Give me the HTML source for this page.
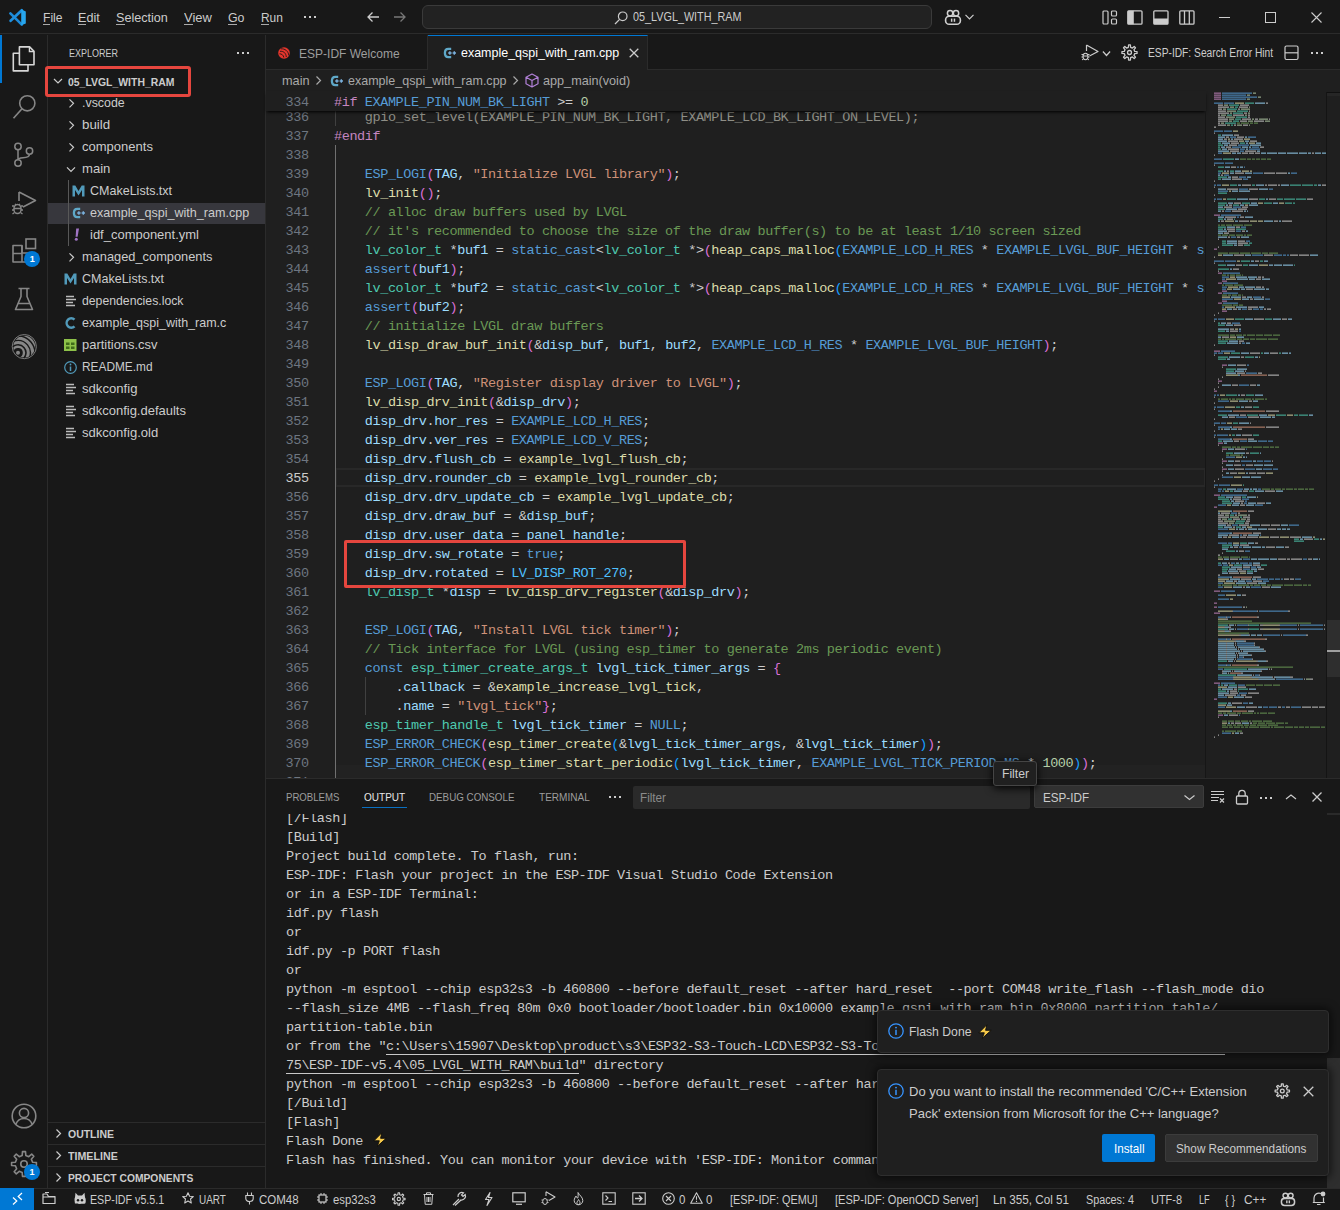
<!DOCTYPE html>
<html><head><meta charset="utf-8"><title>VS Code</title><style>
*{margin:0;padding:0;box-sizing:border-box}
html,body{width:1340px;height:1210px;overflow:hidden;background:#181818}
body{position:relative;font-family:"Liberation Sans",sans-serif;color:#cccccc}
.a{position:absolute}
.t{position:absolute;white-space:pre;transform-origin:0 50%}
.m{position:absolute;white-space:pre;font-family:"Liberation Mono",monospace}
svg{position:absolute;overflow:visible}
.ic{fill:none;stroke:#cccccc;stroke-width:1.2}
</style></head>
<body>
<div class="a" style="left:0;top:0;width:1340px;height:34px;background:#181818;border-bottom:1px solid #2b2b2b"></div>
<svg style="left:5px;top:5px" width="25" height="25" viewBox="0 0 25 25">
<path d="M5.4 8.4L16.8 19.6" stroke="#1d8ad8" stroke-width="2.7" stroke-linecap="round"/>
<path d="M5.6 15.8L16.8 5.2" stroke="#1f8fde" stroke-width="2.7" stroke-linecap="round"/>
<path d="M16.2 4.3L20.8 6.4V18.6L16.2 20.3Z" fill="#27a6ee"/>
</svg>
<div class="t" style="left:43.00px;top:7.79px;font-size:13px;line-height:20px;color:#cccccc;transform:scaleX(0.9306);">File</div>
<div class="a" style="left:43.0px;top:23.5px;width:7.4px;height:1px;background:#aaaaaa"></div>
<div class="t" style="left:78.10px;top:7.79px;font-size:13px;line-height:20px;color:#cccccc;transform:scaleX(0.9685);">Edit</div>
<div class="a" style="left:78.1px;top:23.5px;width:8.4px;height:1px;background:#aaaaaa"></div>
<div class="t" style="left:116.20px;top:7.79px;font-size:13px;line-height:20px;color:#cccccc;transform:scaleX(0.9701);">Selection</div>
<div class="a" style="left:116.2px;top:23.5px;width:8.4px;height:1px;background:#aaaaaa"></div>
<div class="t" style="left:184.00px;top:7.79px;font-size:13px;line-height:20px;color:#cccccc;transform:scaleX(0.9945);">View</div>
<div class="a" style="left:184.0px;top:23.5px;width:8.6px;height:1px;background:#aaaaaa"></div>
<div class="t" style="left:227.70px;top:7.79px;font-size:13px;line-height:20px;color:#cccccc;transform:scaleX(0.9514);">Go</div>
<div class="a" style="left:227.7px;top:23.5px;width:9.6px;height:1px;background:#aaaaaa"></div>
<div class="t" style="left:260.60px;top:7.79px;font-size:13px;line-height:20px;color:#cccccc;transform:scaleX(0.9179);">Run</div>
<div class="a" style="left:260.6px;top:23.5px;width:8.6px;height:1px;background:#aaaaaa"></div>
<div class="a" style="left:304px;top:16px;width:2px;height:2px;background:#cccccc"></div>
<div class="a" style="left:309px;top:16px;width:2px;height:2px;background:#cccccc"></div>
<div class="a" style="left:314px;top:16px;width:2px;height:2px;background:#cccccc"></div>
<svg style="left:366px;top:11px" width="14" height="12" viewBox="0 0 14 12"><path d="M13 6H2M6.5 1.5L2 6l4.5 4.5" fill="none" stroke="#cccccc" stroke-width="1.3"/></svg>
<svg style="left:393px;top:11px" width="14" height="12" viewBox="0 0 14 12"><path d="M1 6h11M7.5 1.5L12 6l-4.5 4.5" fill="none" stroke="#777777" stroke-width="1.3"/></svg>
<div class="a" style="left:421.5px;top:5px;width:510.5px;height:24px;border-radius:6px;background:#222222;border:1px solid #3a3a3a"></div>
<svg style="left:614px;top:11px" width="14" height="14" viewBox="0 0 14 14"><circle cx="8.7" cy="5.3" r="4.3" fill="none" stroke="#cccccc" stroke-width="1.2"/><path d="M5.6 8.4L1 13" stroke="#cccccc" stroke-width="1.3"/></svg>
<div class="t" style="left:632.60px;top:7.49px;font-size:13px;line-height:20px;color:#cccccc;transform:scaleX(0.8319);">05_LVGL_WITH_RAM</div>
<svg style="left:944px;top:8px" width="18" height="18" viewBox="0 0 18 18">
<circle cx="6.1" cy="5.2" r="2.7" fill="none" stroke="#d0d0d0" stroke-width="1.5"/>
<circle cx="12" cy="5.2" r="2.7" fill="none" stroke="#d0d0d0" stroke-width="1.5"/>
<rect x="1.6" y="8.3" width="14.8" height="8" rx="3.6" fill="none" stroke="#d0d0d0" stroke-width="1.6"/>
<rect x="6.9" y="10.6" width="1.5" height="3.2" fill="#d0d0d0"/><rect x="9.7" y="10.6" width="1.5" height="3.2" fill="#d0d0d0"/>
</svg>
<svg style="left:965px;top:14px" width="9" height="6" viewBox="0 0 9 6"><path d="M0.5 0.8L4.5 4.8L8.5 0.8" fill="none" stroke="#cccccc" stroke-width="1.2"/></svg>
<svg style="left:1102px;top:10px" width="16" height="15" viewBox="0 0 16 15">
<rect x="1" y="1" width="5" height="13" rx="1" fill="none" stroke="#cccccc" stroke-width="1.2"/>
<rect x="9.5" y="1" width="5" height="5" rx="1" fill="none" stroke="#cccccc" stroke-width="1.2"/>
<rect x="9.5" y="9" width="5" height="5" rx="1" fill="none" stroke="#cccccc" stroke-width="1.2"/></svg>
<svg style="left:1127px;top:10px" width="16" height="15" viewBox="0 0 16 15">
<rect x="0.8" y="0.8" width="14.2" height="13.4" rx="1" fill="none" stroke="#cccccc" stroke-width="1.3"/>
<rect x="0.8" y="0.8" width="6" height="13.4" fill="#cccccc"/></svg>
<svg style="left:1153px;top:10px" width="16" height="15" viewBox="0 0 16 15">
<rect x="0.8" y="0.8" width="14.2" height="13.4" rx="1" fill="none" stroke="#cccccc" stroke-width="1.3"/>
<rect x="0.8" y="8.5" width="14.2" height="5.7" fill="#cccccc"/></svg>
<svg style="left:1179px;top:10px" width="16" height="15" viewBox="0 0 16 15">
<rect x="0.8" y="0.8" width="14.2" height="13.4" rx="1" fill="none" stroke="#cccccc" stroke-width="1.3"/>
<path d="M5.5 1V14M10.3 1V14" stroke="#cccccc" stroke-width="1.3"/></svg>
<div class="a" style="left:1219px;top:17px;width:11px;height:1px;background:#cccccc"></div>
<div class="a" style="left:1265px;top:12px;width:11px;height:11px;border:1px solid #cccccc"></div>
<svg style="left:1311px;top:12px" width="11" height="11" viewBox="0 0 11 11"><path d="M0.5 0.5L10.5 10.5M10.5 0.5L0.5 10.5" stroke="#cccccc" stroke-width="1.1"/></svg>
<div class="a" style="left:0;top:35px;width:48px;height:1153px;background:#181818;border-right:1px solid #2b2b2b"></div>
<div class="a" style="left:0;top:35px;width:2px;height:48px;background:#0078d4"></div>
<svg style="left:12px;top:46px" width="24" height="26" viewBox="0 0 24 26">
<path d="M7.4 0.9H17.6L22 5.3V18.8H7.4Z" fill="none" stroke="#d7d7d7" stroke-width="1.6" stroke-linejoin="round"/>
<path d="M17.4 1V5.5H22" fill="none" stroke="#d7d7d7" stroke-width="1.3"/>
<path d="M7.4 7.2H1.3V24.9H16V18.8" fill="none" stroke="#d7d7d7" stroke-width="1.6" stroke-linejoin="round"/>
</svg>
<svg style="left:12px;top:94px" width="25" height="26" viewBox="0 0 25 26">
<circle cx="15.3" cy="9.3" r="7.6" fill="none" stroke="#868686" stroke-width="1.6"/>
<path d="M10 14.8L1.5 24.2" stroke="#868686" stroke-width="1.7"/></svg>
<svg style="left:13px;top:142px" width="22" height="26" viewBox="0 0 22 26">
<circle cx="5" cy="4.5" r="3.2" fill="none" stroke="#868686" stroke-width="1.5"/>
<circle cx="5" cy="21" r="3.2" fill="none" stroke="#868686" stroke-width="1.5"/>
<circle cx="16.5" cy="9" r="3.2" fill="none" stroke="#868686" stroke-width="1.5"/>
<path d="M5 7.7V17.8M16.5 12.2C16.5 15 14 15.5 10 15.8C7 16 5 16.8 5 17.8" fill="none" stroke="#868686" stroke-width="1.5"/></svg>
<svg style="left:11px;top:190px" width="26" height="26" viewBox="0 0 26 26">
<path d="M8 2V11M8 2L24.5 10.5L12 17" fill="none" stroke="#868686" stroke-width="1.6" stroke-linejoin="round"/>
<ellipse cx="6.5" cy="19" rx="3.6" ry="4.6" fill="none" stroke="#868686" stroke-width="1.5"/>
<path d="M1 16H3M10 16H12M1 20H3M10 20H12M1.5 24L3.5 22.5M11.5 24L9.5 22.5M4 13.8L5 15M9 13.8L8 15M3 18.5H10" stroke="#868686" stroke-width="1.3"/></svg>
<svg style="left:12px;top:238px" width="25" height="25" viewBox="0 0 25 25">
<path d="M1 7.5H10V15H17.5V24H1Z" fill="none" stroke="#868686" stroke-width="1.6" stroke-linejoin="round"/>
<path d="M1 15.5H10V24M10 7.5V15" fill="none" stroke="#868686" stroke-width="1.6"/>
<rect x="14" y="1" width="9.5" height="9.5" fill="none" stroke="#868686" stroke-width="1.6"/></svg>
<div class="a" style="left:24.2px;top:251.3px;width:16px;height:16px;border-radius:8px;background:#0078d4;color:#fff;font-size:9px;font-weight:bold;line-height:16px;text-align:center">1</div>
<svg style="left:14px;top:287px" width="20" height="24" viewBox="0 0 20 24">
<path d="M4.5 1.5H15.5M7 1.5V9.5L1.5 22.5H18.5L13 9.5V1.5M4 16.5H16" fill="none" stroke="#868686" stroke-width="1.6" stroke-linejoin="round"/></svg>
<svg style="left:8px;top:330px" width="32" height="32" viewBox="0 0 32 32">
<defs><clipPath id="espclip"><circle cx="16.3" cy="16.6" r="10.9"/></clipPath></defs>
<circle cx="16.3" cy="16.6" r="12.1" fill="none" stroke="#868686" stroke-width="0.9"/>
<path d="M4.36 20.75A6.0 6.0 0 1 1 11.04 28.71" fill="none" stroke="#868686" stroke-width="2.4" clip-path="url(#espclip)"/>
<path d="M0.42 19.31A10.2 10.2 0 1 1 11.77 32.85" fill="none" stroke="#868686" stroke-width="3.0" clip-path="url(#espclip)"/>
<path d="M-3.72 17.81A14.6 14.6 0 1 1 12.54 37.18" fill="none" stroke="#868686" stroke-width="3.0" clip-path="url(#espclip)"/>
<path d="M-7.76 16.34A18.9 18.9 0 1 1 13.28 41.41" fill="none" stroke="#868686" stroke-width="2.6" clip-path="url(#espclip)"/>
<circle cx="10" cy="22.8" r="2" fill="#868686"/></svg>
<svg style="left:11px;top:1103px" width="26" height="26" viewBox="0 0 26 26">
<circle cx="13" cy="13" r="11.8" fill="none" stroke="#868686" stroke-width="1.6"/>
<circle cx="13" cy="10" r="4.6" fill="none" stroke="#868686" stroke-width="1.6"/>
<path d="M5 21C6.5 17 9.5 15.5 13 15.5S19.5 17 21 21" fill="none" stroke="#868686" stroke-width="1.6"/></svg>
<svg style="left:0;top:0" width="1" height="1"><path d="M22.18 1155.44 L22.50 1151.59 L25.50 1151.59 L25.82 1155.44 L28.76 1156.66 L31.72 1154.17 L33.83 1156.28 L31.34 1159.24 L32.56 1162.18 L36.41 1162.50 L36.41 1165.50 L32.56 1165.82 L31.34 1168.76 L33.83 1171.72 L31.72 1173.83 L28.76 1171.34 L25.82 1172.56 L25.50 1176.41 L22.50 1176.41 L22.18 1172.56 L19.24 1171.34 L16.28 1173.83 L14.17 1171.72 L16.66 1168.76 L15.44 1165.82 L11.59 1165.50 L11.59 1162.50 L15.44 1162.18 L16.66 1159.24 L14.17 1156.28 L16.28 1154.17 L19.24 1156.66Z" fill="none" stroke="#868686" stroke-width="1.6" stroke-linejoin="round"/><circle cx="24" cy="1164" r="3.25" fill="none" stroke="#868686" stroke-width="1.6"/></svg>
<div class="a" style="left:24.0px;top:1164.0px;width:16px;height:16px;border-radius:8px;background:#0078d4;color:#fff;font-size:9px;font-weight:bold;line-height:16px;text-align:center">1</div>
<div class="a" style="left:48px;top:35px;width:218px;height:1153px;background:#181818;border-right:1px solid #2b2b2b"></div>
<div class="t" style="left:68.60px;top:43.39px;font-size:11px;line-height:20px;color:#cccccc;transform:scaleX(0.8175);">EXPLORER</div>
<div class="a" style="left:237px;top:52px;width:2px;height:2px;background:#cccccc"></div>
<div class="a" style="left:242px;top:52px;width:2px;height:2px;background:#cccccc"></div>
<div class="a" style="left:247px;top:52px;width:2px;height:2px;background:#cccccc"></div>
<div class="a" style="left:48px;top:202.5px;width:217px;height:21.5px;background:#37373d"></div>
<svg style="left:0;top:0" width="1" height="1"><path d="M54.0 79.0L58.0 83.0L62.0 79.0" fill="none" stroke="#cccccc" stroke-width="1.2"/></svg>
<div class="t" style="left:68.00px;top:72.19px;font-size:11px;line-height:20px;color:#cccccc;font-weight:bold;transform:scaleX(0.9485);">05_LVGL_WITH_RAM</div>
<svg style="left:0;top:0" width="1" height="1"><path d="M69.5 99.3L73.5 103.3L69.5 107.3" fill="none" stroke="#cccccc" stroke-width="1.2"/></svg>
<div class="t" style="left:82.00px;top:93.39px;font-size:13px;line-height:20px;color:#cccccc;transform:scaleX(0.9529);">.vscode</div>
<svg style="left:0;top:0" width="1" height="1"><path d="M69.5 121.3L73.5 125.3L69.5 129.3" fill="none" stroke="#cccccc" stroke-width="1.2"/></svg>
<div class="t" style="left:82.00px;top:115.39px;font-size:13px;line-height:20px;color:#cccccc;transform:scaleX(1.0260);">build</div>
<svg style="left:0;top:0" width="1" height="1"><path d="M69.5 143.3L73.5 147.3L69.5 151.3" fill="none" stroke="#cccccc" stroke-width="1.2"/></svg>
<div class="t" style="left:82.00px;top:137.39px;font-size:13px;line-height:20px;color:#cccccc;transform:scaleX(1.0022);">components</div>
<svg style="left:0;top:0" width="1" height="1"><path d="M67.0 167.3L71.0 171.3L75.0 167.3" fill="none" stroke="#cccccc" stroke-width="1.2"/></svg>
<div class="t" style="left:82.00px;top:159.39px;font-size:13px;line-height:20px;color:#cccccc;transform:scaleX(1.0075);">main</div>
<svg style="left:72px;top:185.3px" width="13" height="12" viewBox="0 0 13 12"><path d="M0.5 11.5V0.5H3.3L6.5 6L9.7 0.5H12.5V11.5H10V5L6.5 10.5L3 5V11.5Z" fill="#519aba"/></svg>
<div class="t" style="left:90.00px;top:181.39px;font-size:13px;line-height:20px;color:#cccccc;transform:scaleX(0.9630);">CMakeLists.txt</div>
<svg style="left:72px;top:207.3px" width="14" height="12" viewBox="0 0 14 12"><path d="M8.2 1.9H5.4C3.1 1.9 1.9 3.7 1.9 6S3.1 10.1 5.4 10.1H8.2" fill="none" stroke="#5fa8c8" stroke-width="2.3"/><path d="M5.2 6H8.6M6.9 4.3V7.7M9.6 6H13M11.3 4.3V7.7" stroke="#7ab0dc" stroke-width="1.4"/></svg>
<div class="t" style="left:90.00px;top:203.39px;font-size:13px;line-height:20px;color:#cccccc;transform:scaleX(0.9659);">example_qspi_with_ram.cpp</div>
<svg style="left:74px;top:228.3px" width="6" height="13" viewBox="0 0 6 13"><path d="M2.2 0.5H5L3.6 8.8H1.6Z" fill="#a074c4"/><circle cx="2.3" cy="11.2" r="1.5" fill="#a074c4"/></svg>
<div class="t" style="left:90.00px;top:225.39px;font-size:13px;line-height:20px;color:#cccccc;transform:scaleX(0.9987);">idf_component.yml</div>
<svg style="left:0;top:0" width="1" height="1"><path d="M69.5 253.3L73.5 257.3L69.5 261.3" fill="none" stroke="#cccccc" stroke-width="1.2"/></svg>
<div class="t" style="left:82.00px;top:247.39px;font-size:13px;line-height:20px;color:#cccccc;transform:scaleX(0.9863);">managed_components</div>
<svg style="left:64px;top:273.3px" width="13" height="12" viewBox="0 0 13 12"><path d="M0.5 11.5V0.5H3.3L6.5 6L9.7 0.5H12.5V11.5H10V5L6.5 10.5L3 5V11.5Z" fill="#519aba"/></svg>
<div class="t" style="left:82.00px;top:269.39px;font-size:13px;line-height:20px;color:#cccccc;transform:scaleX(0.9630);">CMakeLists.txt</div>
<svg style="left:65px;top:295.3px" width="12" height="12" viewBox="0 0 12 12"><path d="M1 1.5H9M1 4.5H11M1 7.5H8M1 10.5H10" stroke="#bbbbbb" stroke-width="1.6"/></svg>
<div class="t" style="left:82.00px;top:291.39px;font-size:13px;line-height:20px;color:#cccccc;transform:scaleX(0.9421);">dependencies.lock</div>
<svg style="left:65px;top:317.3px" width="11" height="12" viewBox="0 0 11 12"><path d="M9.5 2.6A4.6 4.8 0 1 0 9.5 9.4" fill="none" stroke="#519aba" stroke-width="2.5"/></svg>
<div class="t" style="left:82.00px;top:313.39px;font-size:13px;line-height:20px;color:#cccccc;transform:scaleX(0.9598);">example_qspi_with_ram.c</div>
<svg style="left:64px;top:339.3px" width="13" height="12" viewBox="0 0 13 12"><rect x="0" y="0" width="12.5" height="12" fill="#8dc149"/><path d="M2 3.5H5.5V6H2ZM7 3.5H10.5V6H7ZM2 7.5H5.5V10H2ZM7 7.5H10.5V10H7Z" fill="#3f6b1a"/></svg>
<div class="t" style="left:82.00px;top:335.39px;font-size:13px;line-height:20px;color:#cccccc;transform:scaleX(0.9951);">partitions.csv</div>
<svg style="left:64px;top:360.8px" width="13" height="13" viewBox="0 0 13 13"><circle cx="6.5" cy="6.5" r="5.8" fill="none" stroke="#519aba" stroke-width="1.2"/><path d="M6.5 5.5V10" stroke="#519aba" stroke-width="1.5"/><circle cx="6.5" cy="3.5" r="0.9" fill="#519aba"/></svg>
<div class="t" style="left:82.00px;top:357.39px;font-size:13px;line-height:20px;color:#cccccc;transform:scaleX(0.9121);">README.md</div>
<svg style="left:65px;top:383.3px" width="12" height="12" viewBox="0 0 12 12"><path d="M1 1.5H9M1 4.5H11M1 7.5H8M1 10.5H10" stroke="#bbbbbb" stroke-width="1.6"/></svg>
<div class="t" style="left:82.00px;top:379.39px;font-size:13px;line-height:20px;color:#cccccc;transform:scaleX(1.0102);">sdkconfig</div>
<svg style="left:65px;top:405.3px" width="12" height="12" viewBox="0 0 12 12"><path d="M1 1.5H9M1 4.5H11M1 7.5H8M1 10.5H10" stroke="#bbbbbb" stroke-width="1.6"/></svg>
<div class="t" style="left:82.00px;top:401.39px;font-size:13px;line-height:20px;color:#cccccc;transform:scaleX(0.9991);">sdkconfig.defaults</div>
<svg style="left:65px;top:427.3px" width="12" height="12" viewBox="0 0 12 12"><path d="M1 1.5H9M1 4.5H11M1 7.5H8M1 10.5H10" stroke="#bbbbbb" stroke-width="1.6"/></svg>
<div class="t" style="left:82.00px;top:423.39px;font-size:13px;line-height:20px;color:#cccccc;transform:scaleX(1.0039);">sdkconfig.old</div>
<div class="a" style="left:68px;top:180px;width:1px;height:66px;background:#585858"></div>
<div class="a" style="left:48px;top:1122px;width:217px;height:1px;background:#2b2b2b"></div>
<svg style="left:0;top:0" width="1" height="1"><path d="M56.5 1129.5L60.5 1133.5L56.5 1137.5" fill="none" stroke="#cccccc" stroke-width="1.2"/></svg>
<div class="t" style="left:68.10px;top:1124.19px;font-size:11px;line-height:20px;color:#cccccc;font-weight:bold;transform:scaleX(0.9528);">OUTLINE</div>
<div class="a" style="left:48px;top:1144px;width:217px;height:1px;background:#2b2b2b"></div>
<svg style="left:0;top:0" width="1" height="1"><path d="M56.5 1151.5L60.5 1155.5L56.5 1159.5" fill="none" stroke="#cccccc" stroke-width="1.2"/></svg>
<div class="t" style="left:68.10px;top:1146.19px;font-size:11px;line-height:20px;color:#cccccc;font-weight:bold;transform:scaleX(0.9699);">TIMELINE</div>
<div class="a" style="left:48px;top:1166px;width:217px;height:1px;background:#2b2b2b"></div>
<svg style="left:0;top:0" width="1" height="1"><path d="M56.5 1173.5L60.5 1177.5L56.5 1181.5" fill="none" stroke="#cccccc" stroke-width="1.2"/></svg>
<div class="t" style="left:68.10px;top:1168.19px;font-size:11px;line-height:20px;color:#cccccc;font-weight:bold;transform:scaleX(0.9359);">PROJECT COMPONENTS</div>
<div class="a" style="left:44.5px;top:66px;width:146.5px;height:31px;border:3px solid #e5463e;border-radius:3px"></div>
<div class="a" style="left:266px;top:35px;width:1074px;height:35px;background:#181818;border-bottom:1px solid #2b2b2b"></div>
<div class="a" style="left:266px;top:35px;width:162px;height:34px;background:#181818;border-right:1px solid #2b2b2b"></div>
<svg style="left:278px;top:47px" width="12" height="12" viewBox="0 0 12 12">
<circle cx="6" cy="6" r="5.8" fill="#e7352c"/>
<path d="M2 4.3C5.5 4 8 6 8.3 10M2.8 1.8C7 1.5 10.5 4.2 10.8 8.5M1.5 6.8C3.5 6.8 5.5 8 5.8 10.5" fill="none" stroke="#181818" stroke-width="0.9"/></svg>
<div class="t" style="left:298.50px;top:43.59px;font-size:13px;line-height:20px;color:#9d9d9d;transform:scaleX(0.9243);">ESP-IDF Welcome</div>
<div class="a" style="left:428px;top:35px;width:220px;height:35px;background:#1f1f1f;border-top:1px solid #0078d4;border-right:1px solid #2b2b2b"></div>
<svg style="left:443px;top:47px" width="14" height="12" viewBox="0 0 14 12"><path d="M8.2 1.9H5.4C3.1 1.9 1.9 3.7 1.9 6S3.1 10.1 5.4 10.1H8.2" fill="none" stroke="#5fa8c8" stroke-width="2.3"/><path d="M5.2 6H8.6M6.9 4.3V7.7M9.6 6H13M11.3 4.3V7.7" stroke="#7ab0dc" stroke-width="1.4"/></svg>
<div class="t" style="left:460.80px;top:43.09px;font-size:13px;line-height:20px;color:#ffffff;transform:scaleX(0.9599);">example_qspi_with_ram.cpp</div>
<svg style="left:629px;top:48px" width="10" height="10" viewBox="0 0 10 10"><path d="M0.7 0.7L9.3 9.3M9.3 0.7L0.7 9.3" stroke="#cccccc" stroke-width="1.3"/></svg>
<svg style="left:1081px;top:44px" width="18" height="17" viewBox="0 0 18 17">
<path d="M5.5 1V7M5.5 1L17 7.5L8.5 12" fill="none" stroke="#cccccc" stroke-width="1.2" stroke-linejoin="round"/>
<ellipse cx="4.5" cy="12.5" rx="2.5" ry="3.2" fill="none" stroke="#cccccc" stroke-width="1.1"/>
<path d="M0.5 10.5H2M7 10.5H8.5M0.5 13H2M7 13H8.5M1 16L2.3 15M8 16L6.7 15M2 12H7" stroke="#cccccc" stroke-width="1"/></svg>
<svg style="left:0;top:0" width="1" height="1"><path d="M1102.9 51.5L1106.5 55.5L1110.1 51.5" fill="none" stroke="#cccccc" stroke-width="1.2"/></svg>
<svg style="left:0;top:0" width="1" height="1"><path d="M1128.39 47.30 L1128.59 44.95 L1130.41 44.95 L1130.61 47.30 L1132.39 48.04 L1134.19 46.52 L1135.48 47.81 L1133.96 49.61 L1134.70 51.39 L1137.05 51.59 L1137.05 53.41 L1134.70 53.61 L1133.96 55.39 L1135.48 57.19 L1134.19 58.48 L1132.39 56.96 L1130.61 57.70 L1130.41 60.05 L1128.59 60.05 L1128.39 57.70 L1126.61 56.96 L1124.81 58.48 L1123.52 57.19 L1125.04 55.39 L1124.30 53.61 L1121.95 53.41 L1121.95 51.59 L1124.30 51.39 L1125.04 49.61 L1123.52 47.81 L1124.81 46.52 L1126.61 48.04Z" fill="none" stroke="#cccccc" stroke-width="1.3" stroke-linejoin="round"/><circle cx="1129.5" cy="52.5" r="1.98" fill="none" stroke="#cccccc" stroke-width="1.3"/></svg>
<div class="t" style="left:1147.70px;top:43.04px;font-size:12px;line-height:20px;color:#cccccc;transform:scaleX(0.8529);">ESP-IDF: Search Error Hint</div>
<svg style="left:1284px;top:45px" width="16" height="16" viewBox="0 0 16 16"><rect x="1" y="1" width="13" height="13.5" rx="1.5" fill="none" stroke="#cccccc" stroke-width="1.2"/><path d="M1 7.8H14" stroke="#cccccc" stroke-width="1.2"/></svg>
<div class="a" style="left:1311px;top:52px;width:2px;height:2px;background:#cccccc"></div>
<div class="a" style="left:1316px;top:52px;width:2px;height:2px;background:#cccccc"></div>
<div class="a" style="left:1321px;top:52px;width:2px;height:2px;background:#cccccc"></div>
<div class="a" style="left:266px;top:70px;width:1074px;height:708px;background:#1f1f1f"></div>
<div class="t" style="left:282.40px;top:71.09px;font-size:13px;line-height:20px;color:#a9a9a9;transform:scaleX(0.9792);">main</div>
<svg style="left:0;top:0" width="1" height="1"><path d="M316.5 76.5L320.5 80.5L316.5 84.5" fill="none" stroke="#a9a9a9" stroke-width="1.2"/></svg>
<svg style="left:330px;top:74.5px" width="14" height="12" viewBox="0 0 14 12"><path d="M8.2 1.9H5.4C3.1 1.9 1.9 3.7 1.9 6S3.1 10.1 5.4 10.1H8.2" fill="none" stroke="#5fa8c8" stroke-width="2.3"/><path d="M5.2 6H8.6M6.9 4.3V7.7M9.6 6H13M11.3 4.3V7.7" stroke="#7ab0dc" stroke-width="1.4"/></svg>
<div class="t" style="left:348.40px;top:71.09px;font-size:13px;line-height:20px;color:#a9a9a9;transform:scaleX(0.9623);">example_qspi_with_ram.cpp</div>
<svg style="left:0;top:0" width="1" height="1"><path d="M513.5 76.5L517.5 80.5L513.5 84.5" fill="none" stroke="#a9a9a9" stroke-width="1.2"/></svg>
<svg style="left:525px;top:73px" width="14" height="15" viewBox="0 0 14 15">
<path d="M7 1L13 4.2V10.8L7 14L1 10.8V4.2Z M1 4.2L7 7.5L13 4.2 M7 7.5V14" fill="none" stroke="#b180d7" stroke-width="1.2" stroke-linejoin="round"/></svg>
<div class="t" style="left:542.50px;top:71.09px;font-size:13px;line-height:20px;color:#a9a9a9;transform:scaleX(0.9728);">app_main(void)</div>
<div class="a" style="left:266px;top:91px;width:940px;height:687px;overflow:hidden">
<div class="a" style="left:69px;top:674px;width:871px;height:13px;background:#222222"></div>
<div class="a" style="left:69px;top:377px;width:871px;height:19px;border:2px solid #282828"></div>
<div class="a" style="left:69px;top:16px;width:1px;height:19px;background:#404040"></div>
<div class="a" style="left:69px;top:54px;width:1px;height:633px;background:#707070"></div>
<div class="a" style="left:99px;top:586px;width:1px;height:38px;background:#404040"></div>
<div class="m" style="left:19.60px;top:16.81px;font-size:13.5px;line-height:19px;letter-spacing:-0.4013499999999999px;color:#6e7681;">336</div>
<div class="m" style="left:68.00px;top:16.81px;font-size:13.5px;line-height:19px;letter-spacing:-0.4013499999999999px;color:#8e8e86;">    gpio_set_level(EXAMPLE_PIN_NUM_BK_LIGHT, EXAMPLE_LCD_BK_LIGHT_ON_LEVEL);</div>
<div class="m" style="left:19.60px;top:35.81px;font-size:13.5px;line-height:19px;letter-spacing:-0.4013499999999999px;color:#6e7681;">337</div>
<div class="m" style="left:68.00px;top:35.81px;font-size:13.5px;line-height:19px;letter-spacing:-0.4013499999999999px;color:#cccccc;"><span style="color:#c586c0">#endif</span></div>
<div class="m" style="left:19.60px;top:54.81px;font-size:13.5px;line-height:19px;letter-spacing:-0.4013499999999999px;color:#6e7681;">338</div>
<div class="m" style="left:19.60px;top:73.81px;font-size:13.5px;line-height:19px;letter-spacing:-0.4013499999999999px;color:#6e7681;">339</div>
<div class="m" style="left:68.00px;top:73.81px;font-size:13.5px;line-height:19px;letter-spacing:-0.4013499999999999px;color:#cccccc;"><span style="color:#cccccc">    </span><span style="color:#569cd6">ESP_LOGI</span><span style="color:#da70d6">(</span><span style="color:#9cdcfe">TAG</span><span style="color:#cccccc">, </span><span style="color:#ce9178">"Initialize LVGL library"</span><span style="color:#da70d6">)</span><span style="color:#cccccc">;</span></div>
<div class="m" style="left:19.60px;top:92.81px;font-size:13.5px;line-height:19px;letter-spacing:-0.4013499999999999px;color:#6e7681;">340</div>
<div class="m" style="left:68.00px;top:92.81px;font-size:13.5px;line-height:19px;letter-spacing:-0.4013499999999999px;color:#cccccc;"><span style="color:#cccccc">    </span><span style="color:#dcdcaa">lv_init</span><span style="color:#da70d6">()</span><span style="color:#cccccc">;</span></div>
<div class="m" style="left:19.60px;top:111.81px;font-size:13.5px;line-height:19px;letter-spacing:-0.4013499999999999px;color:#6e7681;">341</div>
<div class="m" style="left:68.00px;top:111.81px;font-size:13.5px;line-height:19px;letter-spacing:-0.4013499999999999px;color:#cccccc;"><span style="color:#cccccc">    </span><span style="color:#6a9955">// alloc draw buffers used by LVGL</span></div>
<div class="m" style="left:19.60px;top:130.81px;font-size:13.5px;line-height:19px;letter-spacing:-0.4013499999999999px;color:#6e7681;">342</div>
<div class="m" style="left:68.00px;top:130.81px;font-size:13.5px;line-height:19px;letter-spacing:-0.4013499999999999px;color:#cccccc;"><span style="color:#cccccc">    </span><span style="color:#6a9955">// it's recommended to choose the size of the draw buffer(s) to be at least 1/10 screen sized</span></div>
<div class="m" style="left:19.60px;top:149.81px;font-size:13.5px;line-height:19px;letter-spacing:-0.4013499999999999px;color:#6e7681;">343</div>
<div class="m" style="left:68.00px;top:149.81px;font-size:13.5px;line-height:19px;letter-spacing:-0.4013499999999999px;color:#cccccc;"><span style="color:#cccccc">    </span><span style="color:#4ec9b0">lv_color_t</span><span style="color:#cccccc"> *</span><span style="color:#9cdcfe">buf1</span><span style="color:#cccccc"> = </span><span style="color:#569cd6">static_cast</span><span style="color:#cccccc">&lt;</span><span style="color:#4ec9b0">lv_color_t</span><span style="color:#cccccc"> *&gt;</span><span style="color:#da70d6">(</span><span style="color:#dcdcaa">heap_caps_malloc</span><span style="color:#179fff">(</span><span style="color:#569cd6">EXAMPLE_LCD_H_RES</span><span style="color:#cccccc"> * </span><span style="color:#569cd6">EXAMPLE_LVGL_BUF_HEIGHT</span><span style="color:#cccccc"> * </span><span style="color:#569cd6">sizeof</span></div>
<div class="m" style="left:19.60px;top:168.81px;font-size:13.5px;line-height:19px;letter-spacing:-0.4013499999999999px;color:#6e7681;">344</div>
<div class="m" style="left:68.00px;top:168.81px;font-size:13.5px;line-height:19px;letter-spacing:-0.4013499999999999px;color:#cccccc;"><span style="color:#cccccc">    </span><span style="color:#569cd6">assert</span><span style="color:#da70d6">(</span><span style="color:#9cdcfe">buf1</span><span style="color:#da70d6">)</span><span style="color:#cccccc">;</span></div>
<div class="m" style="left:19.60px;top:187.81px;font-size:13.5px;line-height:19px;letter-spacing:-0.4013499999999999px;color:#6e7681;">345</div>
<div class="m" style="left:68.00px;top:187.81px;font-size:13.5px;line-height:19px;letter-spacing:-0.4013499999999999px;color:#cccccc;"><span style="color:#cccccc">    </span><span style="color:#4ec9b0">lv_color_t</span><span style="color:#cccccc"> *</span><span style="color:#9cdcfe">buf2</span><span style="color:#cccccc"> = </span><span style="color:#569cd6">static_cast</span><span style="color:#cccccc">&lt;</span><span style="color:#4ec9b0">lv_color_t</span><span style="color:#cccccc"> *&gt;</span><span style="color:#da70d6">(</span><span style="color:#dcdcaa">heap_caps_malloc</span><span style="color:#179fff">(</span><span style="color:#569cd6">EXAMPLE_LCD_H_RES</span><span style="color:#cccccc"> * </span><span style="color:#569cd6">EXAMPLE_LVGL_BUF_HEIGHT</span><span style="color:#cccccc"> * </span><span style="color:#569cd6">sizeof</span></div>
<div class="m" style="left:19.60px;top:206.81px;font-size:13.5px;line-height:19px;letter-spacing:-0.4013499999999999px;color:#6e7681;">346</div>
<div class="m" style="left:68.00px;top:206.81px;font-size:13.5px;line-height:19px;letter-spacing:-0.4013499999999999px;color:#cccccc;"><span style="color:#cccccc">    </span><span style="color:#569cd6">assert</span><span style="color:#da70d6">(</span><span style="color:#9cdcfe">buf2</span><span style="color:#da70d6">)</span><span style="color:#cccccc">;</span></div>
<div class="m" style="left:19.60px;top:225.81px;font-size:13.5px;line-height:19px;letter-spacing:-0.4013499999999999px;color:#6e7681;">347</div>
<div class="m" style="left:68.00px;top:225.81px;font-size:13.5px;line-height:19px;letter-spacing:-0.4013499999999999px;color:#cccccc;"><span style="color:#cccccc">    </span><span style="color:#6a9955">// initialize LVGL draw buffers</span></div>
<div class="m" style="left:19.60px;top:244.81px;font-size:13.5px;line-height:19px;letter-spacing:-0.4013499999999999px;color:#6e7681;">348</div>
<div class="m" style="left:68.00px;top:244.81px;font-size:13.5px;line-height:19px;letter-spacing:-0.4013499999999999px;color:#cccccc;"><span style="color:#cccccc">    </span><span style="color:#dcdcaa">lv_disp_draw_buf_init</span><span style="color:#da70d6">(</span><span style="color:#cccccc">&amp;</span><span style="color:#9cdcfe">disp_buf</span><span style="color:#cccccc">, </span><span style="color:#9cdcfe">buf1</span><span style="color:#cccccc">, </span><span style="color:#9cdcfe">buf2</span><span style="color:#cccccc">, </span><span style="color:#569cd6">EXAMPLE_LCD_H_RES</span><span style="color:#cccccc"> * </span><span style="color:#569cd6">EXAMPLE_LVGL_BUF_HEIGHT</span><span style="color:#da70d6">)</span><span style="color:#cccccc">;</span></div>
<div class="m" style="left:19.60px;top:263.81px;font-size:13.5px;line-height:19px;letter-spacing:-0.4013499999999999px;color:#6e7681;">349</div>
<div class="m" style="left:19.60px;top:282.81px;font-size:13.5px;line-height:19px;letter-spacing:-0.4013499999999999px;color:#6e7681;">350</div>
<div class="m" style="left:68.00px;top:282.81px;font-size:13.5px;line-height:19px;letter-spacing:-0.4013499999999999px;color:#cccccc;"><span style="color:#cccccc">    </span><span style="color:#569cd6">ESP_LOGI</span><span style="color:#da70d6">(</span><span style="color:#9cdcfe">TAG</span><span style="color:#cccccc">, </span><span style="color:#ce9178">"Register display driver to LVGL"</span><span style="color:#da70d6">)</span><span style="color:#cccccc">;</span></div>
<div class="m" style="left:19.60px;top:301.81px;font-size:13.5px;line-height:19px;letter-spacing:-0.4013499999999999px;color:#6e7681;">351</div>
<div class="m" style="left:68.00px;top:301.81px;font-size:13.5px;line-height:19px;letter-spacing:-0.4013499999999999px;color:#cccccc;"><span style="color:#cccccc">    </span><span style="color:#dcdcaa">lv_disp_drv_init</span><span style="color:#da70d6">(</span><span style="color:#cccccc">&amp;</span><span style="color:#9cdcfe">disp_drv</span><span style="color:#da70d6">)</span><span style="color:#cccccc">;</span></div>
<div class="m" style="left:19.60px;top:320.81px;font-size:13.5px;line-height:19px;letter-spacing:-0.4013499999999999px;color:#6e7681;">352</div>
<div class="m" style="left:68.00px;top:320.81px;font-size:13.5px;line-height:19px;letter-spacing:-0.4013499999999999px;color:#cccccc;"><span style="color:#cccccc">    </span><span style="color:#9cdcfe">disp_drv</span><span style="color:#cccccc">.</span><span style="color:#9cdcfe">hor_res</span><span style="color:#cccccc"> = </span><span style="color:#569cd6">EXAMPLE_LCD_H_RES</span><span style="color:#cccccc">;</span></div>
<div class="m" style="left:19.60px;top:339.81px;font-size:13.5px;line-height:19px;letter-spacing:-0.4013499999999999px;color:#6e7681;">353</div>
<div class="m" style="left:68.00px;top:339.81px;font-size:13.5px;line-height:19px;letter-spacing:-0.4013499999999999px;color:#cccccc;"><span style="color:#cccccc">    </span><span style="color:#9cdcfe">disp_drv</span><span style="color:#cccccc">.</span><span style="color:#9cdcfe">ver_res</span><span style="color:#cccccc"> = </span><span style="color:#569cd6">EXAMPLE_LCD_V_RES</span><span style="color:#cccccc">;</span></div>
<div class="m" style="left:19.60px;top:358.81px;font-size:13.5px;line-height:19px;letter-spacing:-0.4013499999999999px;color:#6e7681;">354</div>
<div class="m" style="left:68.00px;top:358.81px;font-size:13.5px;line-height:19px;letter-spacing:-0.4013499999999999px;color:#cccccc;"><span style="color:#cccccc">    </span><span style="color:#9cdcfe">disp_drv</span><span style="color:#cccccc">.</span><span style="color:#9cdcfe">flush_cb</span><span style="color:#cccccc"> = </span><span style="color:#dcdcaa">example_lvgl_flush_cb</span><span style="color:#cccccc">;</span></div>
<div class="m" style="left:19.60px;top:377.81px;font-size:13.5px;line-height:19px;letter-spacing:-0.4013499999999999px;color:#cccccc;">355</div>
<div class="m" style="left:68.00px;top:377.81px;font-size:13.5px;line-height:19px;letter-spacing:-0.4013499999999999px;color:#cccccc;"><span style="color:#cccccc">    </span><span style="color:#9cdcfe">disp_drv</span><span style="color:#cccccc">.</span><span style="color:#9cdcfe">rounder_cb</span><span style="color:#cccccc"> = </span><span style="color:#dcdcaa">example_lvgl_rounder_cb</span><span style="color:#cccccc">;</span></div>
<div class="m" style="left:19.60px;top:396.81px;font-size:13.5px;line-height:19px;letter-spacing:-0.4013499999999999px;color:#6e7681;">356</div>
<div class="m" style="left:68.00px;top:396.81px;font-size:13.5px;line-height:19px;letter-spacing:-0.4013499999999999px;color:#cccccc;"><span style="color:#cccccc">    </span><span style="color:#9cdcfe">disp_drv</span><span style="color:#cccccc">.</span><span style="color:#9cdcfe">drv_update_cb</span><span style="color:#cccccc"> = </span><span style="color:#dcdcaa">example_lvgl_update_cb</span><span style="color:#cccccc">;</span></div>
<div class="m" style="left:19.60px;top:415.81px;font-size:13.5px;line-height:19px;letter-spacing:-0.4013499999999999px;color:#6e7681;">357</div>
<div class="m" style="left:68.00px;top:415.81px;font-size:13.5px;line-height:19px;letter-spacing:-0.4013499999999999px;color:#cccccc;"><span style="color:#cccccc">    </span><span style="color:#9cdcfe">disp_drv</span><span style="color:#cccccc">.</span><span style="color:#9cdcfe">draw_buf</span><span style="color:#cccccc"> = &amp;</span><span style="color:#9cdcfe">disp_buf</span><span style="color:#cccccc">;</span></div>
<div class="m" style="left:19.60px;top:434.81px;font-size:13.5px;line-height:19px;letter-spacing:-0.4013499999999999px;color:#6e7681;">358</div>
<div class="m" style="left:68.00px;top:434.81px;font-size:13.5px;line-height:19px;letter-spacing:-0.4013499999999999px;color:#cccccc;"><span style="color:#cccccc">    </span><span style="color:#9cdcfe">disp_drv</span><span style="color:#cccccc">.</span><span style="color:#9cdcfe">user_data</span><span style="color:#cccccc"> = </span><span style="color:#9cdcfe">panel_handle</span><span style="color:#cccccc">;</span></div>
<div class="m" style="left:19.60px;top:453.81px;font-size:13.5px;line-height:19px;letter-spacing:-0.4013499999999999px;color:#6e7681;">359</div>
<div class="m" style="left:68.00px;top:453.81px;font-size:13.5px;line-height:19px;letter-spacing:-0.4013499999999999px;color:#cccccc;"><span style="color:#cccccc">    </span><span style="color:#9cdcfe">disp_drv</span><span style="color:#cccccc">.</span><span style="color:#9cdcfe">sw_rotate</span><span style="color:#cccccc"> = </span><span style="color:#569cd6">true</span><span style="color:#cccccc">;</span></div>
<div class="m" style="left:19.60px;top:472.81px;font-size:13.5px;line-height:19px;letter-spacing:-0.4013499999999999px;color:#6e7681;">360</div>
<div class="m" style="left:68.00px;top:472.81px;font-size:13.5px;line-height:19px;letter-spacing:-0.4013499999999999px;color:#cccccc;"><span style="color:#cccccc">    </span><span style="color:#9cdcfe">disp_drv</span><span style="color:#cccccc">.</span><span style="color:#9cdcfe">rotated</span><span style="color:#cccccc"> = </span><span style="color:#4fc1ff">LV_DISP_ROT_270</span><span style="color:#cccccc">;</span></div>
<div class="m" style="left:19.60px;top:491.81px;font-size:13.5px;line-height:19px;letter-spacing:-0.4013499999999999px;color:#6e7681;">361</div>
<div class="m" style="left:68.00px;top:491.81px;font-size:13.5px;line-height:19px;letter-spacing:-0.4013499999999999px;color:#cccccc;"><span style="color:#cccccc">    </span><span style="color:#4ec9b0">lv_disp_t</span><span style="color:#cccccc"> *</span><span style="color:#9cdcfe">disp</span><span style="color:#cccccc"> = </span><span style="color:#dcdcaa">lv_disp_drv_register</span><span style="color:#da70d6">(</span><span style="color:#cccccc">&amp;</span><span style="color:#9cdcfe">disp_drv</span><span style="color:#da70d6">)</span><span style="color:#cccccc">;</span></div>
<div class="m" style="left:19.60px;top:510.81px;font-size:13.5px;line-height:19px;letter-spacing:-0.4013499999999999px;color:#6e7681;">362</div>
<div class="m" style="left:19.60px;top:529.81px;font-size:13.5px;line-height:19px;letter-spacing:-0.4013499999999999px;color:#6e7681;">363</div>
<div class="m" style="left:68.00px;top:529.81px;font-size:13.5px;line-height:19px;letter-spacing:-0.4013499999999999px;color:#cccccc;"><span style="color:#cccccc">    </span><span style="color:#569cd6">ESP_LOGI</span><span style="color:#da70d6">(</span><span style="color:#9cdcfe">TAG</span><span style="color:#cccccc">, </span><span style="color:#ce9178">"Install LVGL tick timer"</span><span style="color:#da70d6">)</span><span style="color:#cccccc">;</span></div>
<div class="m" style="left:19.60px;top:548.81px;font-size:13.5px;line-height:19px;letter-spacing:-0.4013499999999999px;color:#6e7681;">364</div>
<div class="m" style="left:68.00px;top:548.81px;font-size:13.5px;line-height:19px;letter-spacing:-0.4013499999999999px;color:#cccccc;"><span style="color:#cccccc">    </span><span style="color:#6a9955">// Tick interface for LVGL (using esp_timer to generate 2ms periodic event)</span></div>
<div class="m" style="left:19.60px;top:567.81px;font-size:13.5px;line-height:19px;letter-spacing:-0.4013499999999999px;color:#6e7681;">365</div>
<div class="m" style="left:68.00px;top:567.81px;font-size:13.5px;line-height:19px;letter-spacing:-0.4013499999999999px;color:#cccccc;"><span style="color:#cccccc">    </span><span style="color:#569cd6">const</span><span style="color:#cccccc"> </span><span style="color:#4ec9b0">esp_timer_create_args_t</span><span style="color:#cccccc"> </span><span style="color:#9cdcfe">lvgl_tick_timer_args</span><span style="color:#cccccc"> = </span><span style="color:#da70d6">{</span></div>
<div class="m" style="left:19.60px;top:586.81px;font-size:13.5px;line-height:19px;letter-spacing:-0.4013499999999999px;color:#6e7681;">366</div>
<div class="m" style="left:68.00px;top:586.81px;font-size:13.5px;line-height:19px;letter-spacing:-0.4013499999999999px;color:#cccccc;"><span style="color:#cccccc">        .</span><span style="color:#9cdcfe">callback</span><span style="color:#cccccc"> = &amp;</span><span style="color:#dcdcaa">example_increase_lvgl_tick</span><span style="color:#cccccc">,</span></div>
<div class="m" style="left:19.60px;top:605.81px;font-size:13.5px;line-height:19px;letter-spacing:-0.4013499999999999px;color:#6e7681;">367</div>
<div class="m" style="left:68.00px;top:605.81px;font-size:13.5px;line-height:19px;letter-spacing:-0.4013499999999999px;color:#cccccc;"><span style="color:#cccccc">        .</span><span style="color:#9cdcfe">name</span><span style="color:#cccccc"> = </span><span style="color:#ce9178">"lvgl_tick"</span><span style="color:#da70d6">}</span><span style="color:#cccccc">;</span></div>
<div class="m" style="left:19.60px;top:624.81px;font-size:13.5px;line-height:19px;letter-spacing:-0.4013499999999999px;color:#6e7681;">368</div>
<div class="m" style="left:68.00px;top:624.81px;font-size:13.5px;line-height:19px;letter-spacing:-0.4013499999999999px;color:#cccccc;"><span style="color:#cccccc">    </span><span style="color:#4ec9b0">esp_timer_handle_t</span><span style="color:#cccccc"> </span><span style="color:#9cdcfe">lvgl_tick_timer</span><span style="color:#cccccc"> = </span><span style="color:#569cd6">NULL</span><span style="color:#cccccc">;</span></div>
<div class="m" style="left:19.60px;top:643.81px;font-size:13.5px;line-height:19px;letter-spacing:-0.4013499999999999px;color:#6e7681;">369</div>
<div class="m" style="left:68.00px;top:643.81px;font-size:13.5px;line-height:19px;letter-spacing:-0.4013499999999999px;color:#cccccc;"><span style="color:#cccccc">    </span><span style="color:#569cd6">ESP_ERROR_CHECK</span><span style="color:#da70d6">(</span><span style="color:#dcdcaa">esp_timer_create</span><span style="color:#179fff">(</span><span style="color:#cccccc">&amp;</span><span style="color:#9cdcfe">lvgl_tick_timer_args</span><span style="color:#cccccc">, &amp;</span><span style="color:#9cdcfe">lvgl_tick_timer</span><span style="color:#179fff">)</span><span style="color:#da70d6">)</span><span style="color:#cccccc">;</span></div>
<div class="m" style="left:19.60px;top:662.81px;font-size:13.5px;line-height:19px;letter-spacing:-0.4013499999999999px;color:#6e7681;">370</div>
<div class="m" style="left:68.00px;top:662.81px;font-size:13.5px;line-height:19px;letter-spacing:-0.4013499999999999px;color:#cccccc;"><span style="color:#cccccc">    </span><span style="color:#569cd6">ESP_ERROR_CHECK</span><span style="color:#da70d6">(</span><span style="color:#dcdcaa">esp_timer_start_periodic</span><span style="color:#179fff">(</span><span style="color:#9cdcfe">lvgl_tick_timer</span><span style="color:#cccccc">, </span><span style="color:#569cd6">EXAMPLE_LVGL_TICK_PERIOD_MS</span><span style="color:#cccccc"> * </span><span style="color:#b5cea8">1000</span><span style="color:#179fff">)</span><span style="color:#da70d6">)</span><span style="color:#cccccc">;</span></div>
<div class="m" style="left:19.60px;top:681.81px;font-size:13.5px;line-height:19px;letter-spacing:-0.4013499999999999px;color:#6e7681;">371</div>
</div>
<div class="a" style="left:266px;top:91px;width:940px;height:20px;background:#1f1f1f;box-shadow:0 2px 3px -1px #000"></div>
<div class="m" style="left:285.60px;top:93.11px;font-size:13.5px;line-height:19px;letter-spacing:-0.4013499999999999px;color:#6e7681;">334</div>
<div class="m" style="left:334.00px;top:93.11px;font-size:13.5px;line-height:19px;letter-spacing:-0.4013499999999999px;color:#cccccc;"><span style="color:#c586c0">#if</span><span style="color:#cccccc"> </span><span style="color:#569cd6">EXAMPLE_PIN_NUM_BK_LIGHT</span><span style="color:#cccccc"> &gt;= </span><span style="color:#b5cea8">0</span></div>
<div class="a" style="left:343.5px;top:539.5px;width:342.5px;height:48px;border:3px solid #e5463e;border-radius:2px"></div>
<svg style="left:1206px;top:91px" width="121" height="687" viewBox="0 0 121 687">
<g opacity="0.72">
<rect x="8" y="1.5" width="7" height="1.3" fill="#c586c0"/>
<rect x="16" y="1.5" width="30" height="1.3" fill="#569cd6"/>
<rect x="47" y="1.5" width="3" height="1.3" fill="#b5cea8"/>
<rect x="8" y="3.5" width="7" height="1.3" fill="#c586c0"/>
<rect x="16" y="3.5" width="24" height="1.3" fill="#569cd6"/>
<rect x="41" y="3.5" width="3" height="1.3" fill="#b5cea8"/>
<rect x="8" y="5.5" width="7" height="1.3" fill="#c586c0"/>
<rect x="16" y="5.5" width="35" height="1.3" fill="#569cd6"/>
<rect x="52" y="5.5" width="3" height="1.3" fill="#b5cea8"/>
<rect x="8" y="7.5" width="7" height="1.3" fill="#c586c0"/>
<rect x="16" y="7.5" width="24" height="1.3" fill="#569cd6"/>
<rect x="41" y="7.5" width="3" height="1.3" fill="#b5cea8"/>
<rect x="8" y="11.5" width="9" height="1.3" fill="#569cd6"/>
<rect x="18" y="11.5" width="10" height="1.3" fill="#569cd6"/>
<rect x="29" y="11.5" width="9" height="1.3" fill="#dcdcaa"/>
<rect x="39" y="11.5" width="9" height="1.3" fill="#4ec9b0"/>
<rect x="49" y="11.5" width="10" height="1.3" fill="#9cdcfe"/>
<rect x="60" y="11.5" width="2" height="1.3" fill="#cccccc"/>
<rect x="12" y="13.5" width="5" height="1.3" fill="#cccccc"/>
<rect x="18" y="13.5" width="4" height="1.3" fill="#b5cea8"/>
<rect x="23" y="13.5" width="10" height="1.3" fill="#4ec9b0"/>
<rect x="34" y="13.5" width="9" height="1.3" fill="#cccccc"/>
<rect x="12" y="15.5" width="11" height="1.3" fill="#cccccc"/>
<rect x="24" y="15.5" width="4" height="1.3" fill="#b5cea8"/>
<rect x="29" y="15.5" width="3" height="1.3" fill="#4ec9b0"/>
<rect x="33" y="15.5" width="9" height="1.3" fill="#cccccc"/>
<rect x="43" y="15.5" width="1" height="1.3" fill="#b5cea8"/>
<rect x="12" y="17.5" width="4" height="1.3" fill="#cccccc"/>
<rect x="17" y="17.5" width="3" height="1.3" fill="#b5cea8"/>
<rect x="21" y="17.5" width="10" height="1.3" fill="#4ec9b0"/>
<rect x="32" y="17.5" width="2" height="1.3" fill="#cccccc"/>
<rect x="35" y="17.5" width="9" height="1.3" fill="#b5cea8"/>
<rect x="12" y="19.5" width="8" height="1.3" fill="#cccccc"/>
<rect x="21" y="19.5" width="9" height="1.3" fill="#b5cea8"/>
<rect x="31" y="19.5" width="11" height="1.3" fill="#4ec9b0"/>
<rect x="43" y="19.5" width="1" height="1.3" fill="#cccccc"/>
<rect x="12" y="21.5" width="11" height="1.3" fill="#cccccc"/>
<rect x="24" y="21.5" width="2" height="1.3" fill="#b5cea8"/>
<rect x="27" y="21.5" width="10" height="1.3" fill="#4ec9b0"/>
<rect x="38" y="21.5" width="3" height="1.3" fill="#cccccc"/>
<rect x="42" y="21.5" width="2" height="1.3" fill="#b5cea8"/>
<rect x="12" y="23.5" width="2" height="1.3" fill="#cccccc"/>
<rect x="15" y="23.5" width="5" height="1.3" fill="#b5cea8"/>
<rect x="21" y="23.5" width="5" height="1.3" fill="#4ec9b0"/>
<rect x="27" y="23.5" width="11" height="1.3" fill="#cccccc"/>
<rect x="39" y="23.5" width="2" height="1.3" fill="#b5cea8"/>
<rect x="42" y="23.5" width="2" height="1.3" fill="#cccccc"/>
<rect x="12" y="25.5" width="7" height="1.3" fill="#cccccc"/>
<rect x="20" y="25.5" width="9" height="1.3" fill="#b5cea8"/>
<rect x="30" y="25.5" width="11" height="1.3" fill="#4ec9b0"/>
<rect x="42" y="25.5" width="2" height="1.3" fill="#cccccc"/>
<rect x="12" y="27.5" width="10" height="1.3" fill="#cccccc"/>
<rect x="23" y="27.5" width="5" height="1.3" fill="#b5cea8"/>
<rect x="29" y="27.5" width="6" height="1.3" fill="#4ec9b0"/>
<rect x="36" y="27.5" width="9" height="1.3" fill="#cccccc"/>
<rect x="46" y="27.5" width="2" height="1.3" fill="#b5cea8"/>
<rect x="49" y="27.5" width="3" height="1.3" fill="#cccccc"/>
<rect x="53" y="27.5" width="9" height="1.3" fill="#b5cea8"/>
<rect x="63" y="27.5" width="1" height="1.3" fill="#cccccc"/>
<rect x="12" y="29.5" width="10" height="1.3" fill="#cccccc"/>
<rect x="23" y="29.5" width="3" height="1.3" fill="#b5cea8"/>
<rect x="27" y="29.5" width="6" height="1.3" fill="#4ec9b0"/>
<rect x="34" y="29.5" width="7" height="1.3" fill="#cccccc"/>
<rect x="42" y="29.5" width="5" height="1.3" fill="#b5cea8"/>
<rect x="48" y="29.5" width="10" height="1.3" fill="#cccccc"/>
<rect x="59" y="29.5" width="5" height="1.3" fill="#b5cea8"/>
<rect x="12" y="31.5" width="2" height="1.3" fill="#cccccc"/>
<rect x="15" y="31.5" width="3" height="1.3" fill="#b5cea8"/>
<rect x="19" y="31.5" width="11" height="1.3" fill="#4ec9b0"/>
<rect x="31" y="31.5" width="3" height="1.3" fill="#6a9955"/>
<rect x="35" y="31.5" width="8" height="1.3" fill="#6a9955"/>
<rect x="44" y="31.5" width="3" height="1.3" fill="#6a9955"/>
<rect x="48" y="31.5" width="4" height="1.3" fill="#6a9955"/>
<rect x="12" y="33.5" width="8" height="1.3" fill="#cccccc"/>
<rect x="21" y="33.5" width="3" height="1.3" fill="#b5cea8"/>
<rect x="25" y="33.5" width="2" height="1.3" fill="#4ec9b0"/>
<rect x="28" y="33.5" width="2" height="1.3" fill="#cccccc"/>
<rect x="31" y="33.5" width="5" height="1.3" fill="#b5cea8"/>
<rect x="37" y="33.5" width="5" height="1.3" fill="#cccccc"/>
<rect x="43" y="33.5" width="1" height="1.3" fill="#b5cea8"/>
<rect x="8" y="35.5" width="2" height="1.3" fill="#cccccc"/>
<rect x="8" y="39.5" width="9" height="1.3" fill="#569cd6"/>
<rect x="18" y="39.5" width="8" height="1.3" fill="#569cd6"/>
<rect x="27" y="39.5" width="5" height="1.3" fill="#dcdcaa"/>
<rect x="8" y="41.5" width="1" height="1.3" fill="#cccccc"/>
<rect x="12" y="43.5" width="3" height="1.3" fill="#4ec9b0"/>
<rect x="16" y="43.5" width="11" height="1.3" fill="#9cdcfe"/>
<rect x="28" y="43.5" width="5" height="1.3" fill="#cccccc"/>
<rect x="12" y="45.5" width="7" height="1.3" fill="#9cdcfe"/>
<rect x="20" y="45.5" width="3" height="1.3" fill="#cccccc"/>
<rect x="24" y="45.5" width="6" height="1.3" fill="#569cd6"/>
<rect x="31" y="45.5" width="7" height="1.3" fill="#cccccc"/>
<rect x="39" y="45.5" width="2" height="1.3" fill="#9cdcfe"/>
<rect x="42" y="45.5" width="8" height="1.3" fill="#569cd6"/>
<rect x="12" y="47.5" width="5" height="1.3" fill="#9cdcfe"/>
<rect x="18" y="47.5" width="3" height="1.3" fill="#cccccc"/>
<rect x="22" y="47.5" width="2" height="1.3" fill="#dcdcaa"/>
<rect x="25" y="47.5" width="2" height="1.3" fill="#9cdcfe"/>
<rect x="28" y="47.5" width="9" height="1.3" fill="#cccccc"/>
<rect x="38" y="47.5" width="6" height="1.3" fill="#dcdcaa"/>
<rect x="12" y="49.5" width="9" height="1.3" fill="#9cdcfe"/>
<rect x="22" y="49.5" width="10" height="1.3" fill="#cccccc"/>
<rect x="33" y="49.5" width="5" height="1.3" fill="#dcdcaa"/>
<rect x="39" y="49.5" width="4" height="1.3" fill="#9cdcfe"/>
<rect x="44" y="49.5" width="7" height="1.3" fill="#cccccc"/>
<rect x="12" y="51.5" width="3" height="1.3" fill="#4ec9b0"/>
<rect x="16" y="51.5" width="8" height="1.3" fill="#9cdcfe"/>
<rect x="25" y="51.5" width="8" height="1.3" fill="#cccccc"/>
<rect x="34" y="51.5" width="5" height="1.3" fill="#4ec9b0"/>
<rect x="40" y="51.5" width="2" height="1.3" fill="#9cdcfe"/>
<rect x="43" y="51.5" width="6" height="1.3" fill="#dcdcaa"/>
<rect x="50" y="51.5" width="5" height="1.3" fill="#9cdcfe"/>
<rect x="12" y="53.5" width="5" height="1.3" fill="#4ec9b0"/>
<rect x="18" y="53.5" width="4" height="1.3" fill="#9cdcfe"/>
<rect x="23" y="53.5" width="8" height="1.3" fill="#cccccc"/>
<rect x="32" y="53.5" width="11" height="1.3" fill="#569cd6"/>
<rect x="44" y="53.5" width="11" height="1.3" fill="#9cdcfe"/>
<rect x="12" y="55.5" width="2" height="1.3" fill="#4ec9b0"/>
<rect x="15" y="55.5" width="4" height="1.3" fill="#9cdcfe"/>
<rect x="20" y="55.5" width="5" height="1.3" fill="#cccccc"/>
<rect x="26" y="55.5" width="9" height="1.3" fill="#569cd6"/>
<rect x="36" y="55.5" width="6" height="1.3" fill="#9cdcfe"/>
<rect x="43" y="55.5" width="2" height="1.3" fill="#9cdcfe"/>
<rect x="46" y="55.5" width="7" height="1.3" fill="#569cd6"/>
<rect x="54" y="55.5" width="4" height="1.3" fill="#cccccc"/>
<rect x="12" y="57.5" width="3" height="1.3" fill="#4ec9b0"/>
<rect x="16" y="57.5" width="5" height="1.3" fill="#9cdcfe"/>
<rect x="22" y="57.5" width="11" height="1.3" fill="#cccccc"/>
<rect x="34" y="57.5" width="5" height="1.3" fill="#569cd6"/>
<rect x="40" y="57.5" width="2" height="1.3" fill="#9cdcfe"/>
<rect x="43" y="57.5" width="11" height="1.3" fill="#569cd6"/>
<rect x="12" y="59.5" width="11" height="1.3" fill="#9cdcfe"/>
<rect x="24" y="59.5" width="9" height="1.3" fill="#cccccc"/>
<rect x="34" y="59.5" width="4" height="1.3" fill="#569cd6"/>
<rect x="39" y="59.5" width="11" height="1.3" fill="#cccccc"/>
<rect x="51" y="59.5" width="3" height="1.3" fill="#9cdcfe"/>
<rect x="12" y="61.5" width="4" height="1.3" fill="#569cd6"/>
<rect x="17" y="61.5" width="8" height="1.3" fill="#dcdcaa"/>
<rect x="26" y="61.5" width="4" height="1.3" fill="#9cdcfe"/>
<rect x="31" y="61.5" width="4" height="1.3" fill="#9cdcfe"/>
<rect x="36" y="61.5" width="6" height="1.3" fill="#cccccc"/>
<rect x="43" y="61.5" width="5" height="1.3" fill="#cccccc"/>
<rect x="49" y="61.5" width="5" height="1.3" fill="#cccccc"/>
<rect x="55" y="61.5" width="5" height="1.3" fill="#9cdcfe"/>
<rect x="61" y="61.5" width="10" height="1.3" fill="#9cdcfe"/>
<rect x="72" y="61.5" width="8" height="1.3" fill="#9cdcfe"/>
<rect x="81" y="61.5" width="11" height="1.3" fill="#9cdcfe"/>
<rect x="93" y="61.5" width="8" height="1.3" fill="#9cdcfe"/>
<rect x="102" y="61.5" width="3" height="1.3" fill="#9cdcfe"/>
<rect x="106" y="61.5" width="2" height="1.3" fill="#cccccc"/>
<rect x="109" y="61.5" width="6" height="1.3" fill="#9cdcfe"/>
<rect x="116" y="61.5" width="4" height="1.3" fill="#9cdcfe"/>
<rect x="8" y="63.5" width="1" height="1.3" fill="#cccccc"/>
<rect x="8" y="67.5" width="8" height="1.3" fill="#569cd6"/>
<rect x="17" y="67.5" width="11" height="1.3" fill="#4ec9b0"/>
<rect x="29" y="67.5" width="4" height="1.3" fill="#9cdcfe"/>
<rect x="34" y="67.5" width="6" height="1.3" fill="#6a9955"/>
<rect x="41" y="67.5" width="4" height="1.3" fill="#6a9955"/>
<rect x="46" y="67.5" width="3" height="1.3" fill="#6a9955"/>
<rect x="50" y="67.5" width="4" height="1.3" fill="#6a9955"/>
<rect x="55" y="67.5" width="5" height="1.3" fill="#6a9955"/>
<rect x="61" y="67.5" width="4" height="1.3" fill="#6a9955"/>
<rect x="8" y="71.5" width="10" height="1.3" fill="#569cd6"/>
<rect x="19" y="71.5" width="8" height="1.3" fill="#569cd6"/>
<rect x="8" y="73.5" width="1" height="1.3" fill="#cccccc"/>
<rect x="12" y="75.5" width="6" height="1.3" fill="#4ec9b0"/>
<rect x="19" y="75.5" width="5" height="1.3" fill="#9cdcfe"/>
<rect x="25" y="75.5" width="5" height="1.3" fill="#cccccc"/>
<rect x="31" y="75.5" width="2" height="1.3" fill="#569cd6"/>
<rect x="34" y="75.5" width="3" height="1.3" fill="#9cdcfe"/>
<rect x="38" y="75.5" width="1" height="1.3" fill="#569cd6"/>
<rect x="12" y="79.5" width="5" height="1.3" fill="#4ec9b0"/>
<rect x="18" y="79.5" width="2" height="1.3" fill="#9cdcfe"/>
<rect x="21" y="79.5" width="2" height="1.3" fill="#cccccc"/>
<rect x="24" y="79.5" width="4" height="1.3" fill="#4ec9b0"/>
<rect x="29" y="79.5" width="6" height="1.3" fill="#9cdcfe"/>
<rect x="36" y="79.5" width="7" height="1.3" fill="#dcdcaa"/>
<rect x="44" y="79.5" width="2" height="1.3" fill="#dcdcaa"/>
<rect x="12" y="81.5" width="3" height="1.3" fill="#569cd6"/>
<rect x="16" y="81.5" width="7" height="1.3" fill="#dcdcaa"/>
<rect x="24" y="81.5" width="4" height="1.3" fill="#9cdcfe"/>
<rect x="29" y="81.5" width="9" height="1.3" fill="#cccccc"/>
<rect x="39" y="81.5" width="7" height="1.3" fill="#9cdcfe"/>
<rect x="47" y="81.5" width="10" height="1.3" fill="#569cd6"/>
<rect x="58" y="81.5" width="11" height="1.3" fill="#cccccc"/>
<rect x="70" y="81.5" width="11" height="1.3" fill="#cccccc"/>
<rect x="82" y="81.5" width="2" height="1.3" fill="#9cdcfe"/>
<rect x="85" y="81.5" width="6" height="1.3" fill="#569cd6"/>
<rect x="12" y="83.5" width="2" height="1.3" fill="#9cdcfe"/>
<rect x="15" y="83.5" width="2" height="1.3" fill="#cccccc"/>
<rect x="18" y="83.5" width="5" height="1.3" fill="#569cd6"/>
<rect x="12" y="85.5" width="9" height="1.3" fill="#4ec9b0"/>
<rect x="22" y="85.5" width="3" height="1.3" fill="#9cdcfe"/>
<rect x="26" y="85.5" width="6" height="1.3" fill="#cccccc"/>
<rect x="33" y="85.5" width="7" height="1.3" fill="#569cd6"/>
<rect x="41" y="85.5" width="4" height="1.3" fill="#9cdcfe"/>
<rect x="12" y="87.5" width="3" height="1.3" fill="#4ec9b0"/>
<rect x="16" y="87.5" width="9" height="1.3" fill="#9cdcfe"/>
<rect x="26" y="87.5" width="10" height="1.3" fill="#cccccc"/>
<rect x="37" y="87.5" width="5" height="1.3" fill="#569cd6"/>
<rect x="8" y="89.5" width="1" height="1.3" fill="#cccccc"/>
<rect x="8" y="93.5" width="2" height="1.3" fill="#569cd6"/>
<rect x="11" y="93.5" width="4" height="1.3" fill="#569cd6"/>
<rect x="16" y="93.5" width="7" height="1.3" fill="#dcdcaa"/>
<rect x="24" y="93.5" width="7" height="1.3" fill="#4ec9b0"/>
<rect x="32" y="93.5" width="3" height="1.3" fill="#9cdcfe"/>
<rect x="36" y="93.5" width="9" height="1.3" fill="#cccccc"/>
<rect x="46" y="93.5" width="3" height="1.3" fill="#4ec9b0"/>
<rect x="50" y="93.5" width="8" height="1.3" fill="#9cdcfe"/>
<rect x="59" y="93.5" width="2" height="1.3" fill="#cccccc"/>
<rect x="62" y="93.5" width="9" height="1.3" fill="#cccccc"/>
<rect x="72" y="93.5" width="2" height="1.3" fill="#cccccc"/>
<rect x="75" y="93.5" width="8" height="1.3" fill="#9cdcfe"/>
<rect x="84" y="93.5" width="11" height="1.3" fill="#4ec9b0"/>
<rect x="96" y="93.5" width="11" height="1.3" fill="#4ec9b0"/>
<rect x="108" y="93.5" width="3" height="1.3" fill="#4ec9b0"/>
<rect x="112" y="93.5" width="3" height="1.3" fill="#9cdcfe"/>
<rect x="116" y="93.5" width="4" height="1.3" fill="#cccccc"/>
<rect x="8" y="95.5" width="1" height="1.3" fill="#cccccc"/>
<rect x="12" y="97.5" width="8" height="1.3" fill="#9cdcfe"/>
<rect x="21" y="97.5" width="11" height="1.3" fill="#cccccc"/>
<rect x="33" y="97.5" width="9" height="1.3" fill="#569cd6"/>
<rect x="43" y="97.5" width="9" height="1.3" fill="#cccccc"/>
<rect x="53" y="97.5" width="9" height="1.3" fill="#9cdcfe"/>
<rect x="63" y="97.5" width="4" height="1.3" fill="#569cd6"/>
<rect x="12" y="99.5" width="10" height="1.3" fill="#569cd6"/>
<rect x="23" y="99.5" width="2" height="1.3" fill="#dcdcaa"/>
<rect x="26" y="99.5" width="6" height="1.3" fill="#9cdcfe"/>
<rect x="33" y="99.5" width="11" height="1.3" fill="#9cdcfe"/>
<rect x="12" y="101.5" width="9" height="1.3" fill="#4ec9b0"/>
<rect x="8" y="103.5" width="1" height="1.3" fill="#cccccc"/>
<rect x="8" y="107.5" width="2" height="1.3" fill="#569cd6"/>
<rect x="11" y="107.5" width="5" height="1.3" fill="#569cd6"/>
<rect x="17" y="107.5" width="3" height="1.3" fill="#dcdcaa"/>
<rect x="21" y="107.5" width="9" height="1.3" fill="#4ec9b0"/>
<rect x="31" y="107.5" width="11" height="1.3" fill="#9cdcfe"/>
<rect x="43" y="107.5" width="9" height="1.3" fill="#cccccc"/>
<rect x="53" y="107.5" width="6" height="1.3" fill="#4ec9b0"/>
<rect x="60" y="107.5" width="2" height="1.3" fill="#9cdcfe"/>
<rect x="63" y="107.5" width="7" height="1.3" fill="#cccccc"/>
<rect x="71" y="107.5" width="6" height="1.3" fill="#4ec9b0"/>
<rect x="78" y="107.5" width="11" height="1.3" fill="#4ec9b0"/>
<rect x="90" y="107.5" width="10" height="1.3" fill="#4ec9b0"/>
<rect x="101" y="107.5" width="6" height="1.3" fill="#cccccc"/>
<rect x="8" y="109.5" width="1" height="1.3" fill="#cccccc"/>
<rect x="12" y="111.5" width="9" height="1.3" fill="#4ec9b0"/>
<rect x="22" y="111.5" width="5" height="1.3" fill="#9cdcfe"/>
<rect x="28" y="111.5" width="7" height="1.3" fill="#cccccc"/>
<rect x="36" y="111.5" width="8" height="1.3" fill="#4ec9b0"/>
<rect x="45" y="111.5" width="6" height="1.3" fill="#9cdcfe"/>
<rect x="52" y="111.5" width="5" height="1.3" fill="#dcdcaa"/>
<rect x="58" y="111.5" width="8" height="1.3" fill="#4ec9b0"/>
<rect x="67" y="111.5" width="5" height="1.3" fill="#9cdcfe"/>
<rect x="73" y="111.5" width="5" height="1.3" fill="#dcdcaa"/>
<rect x="79" y="111.5" width="7" height="1.3" fill="#4ec9b0"/>
<rect x="87" y="111.5" width="2" height="1.3" fill="#4ec9b0"/>
<rect x="12" y="113.5" width="7" height="1.3" fill="#4ec9b0"/>
<rect x="20" y="113.5" width="2" height="1.3" fill="#9cdcfe"/>
<rect x="23" y="113.5" width="3" height="1.3" fill="#cccccc"/>
<rect x="27" y="113.5" width="6" height="1.3" fill="#4ec9b0"/>
<rect x="34" y="113.5" width="4" height="1.3" fill="#9cdcfe"/>
<rect x="39" y="113.5" width="3" height="1.3" fill="#dcdcaa"/>
<rect x="43" y="113.5" width="9" height="1.3" fill="#9cdcfe"/>
<rect x="12" y="115.5" width="5" height="1.3" fill="#9cdcfe"/>
<rect x="18" y="115.5" width="8" height="1.3" fill="#cccccc"/>
<rect x="27" y="115.5" width="8" height="1.3" fill="#569cd6"/>
<rect x="36" y="115.5" width="6" height="1.3" fill="#cccccc"/>
<rect x="12" y="117.5" width="7" height="1.3" fill="#4ec9b0"/>
<rect x="20" y="117.5" width="11" height="1.3" fill="#9cdcfe"/>
<rect x="32" y="117.5" width="9" height="1.3" fill="#cccccc"/>
<rect x="12" y="119.5" width="3" height="1.3" fill="#9cdcfe"/>
<rect x="16" y="119.5" width="2" height="1.3" fill="#cccccc"/>
<rect x="19" y="119.5" width="6" height="1.3" fill="#569cd6"/>
<rect x="26" y="119.5" width="11" height="1.3" fill="#cccccc"/>
<rect x="38" y="119.5" width="2" height="1.3" fill="#9cdcfe"/>
<rect x="41" y="119.5" width="1" height="1.3" fill="#9cdcfe"/>
<rect x="8" y="123.5" width="6" height="1.3" fill="#c586c0"/>
<rect x="15" y="123.5" width="20" height="1.3" fill="#569cd6"/>
<rect x="12" y="125.5" width="6" height="1.3" fill="#9cdcfe"/>
<rect x="19" y="125.5" width="11" height="1.3" fill="#cccccc"/>
<rect x="31" y="125.5" width="2" height="1.3" fill="#569cd6"/>
<rect x="34" y="125.5" width="4" height="1.3" fill="#cccccc"/>
<rect x="39" y="125.5" width="8" height="1.3" fill="#9cdcfe"/>
<rect x="12" y="127.5" width="5" height="1.3" fill="#4ec9b0"/>
<rect x="18" y="127.5" width="2" height="1.3" fill="#9cdcfe"/>
<rect x="21" y="127.5" width="6" height="1.3" fill="#cccccc"/>
<rect x="28" y="127.5" width="1" height="1.3" fill="#4ec9b0"/>
<rect x="12" y="129.5" width="2" height="1.3" fill="#9cdcfe"/>
<rect x="15" y="129.5" width="3" height="1.3" fill="#cccccc"/>
<rect x="19" y="129.5" width="9" height="1.3" fill="#dcdcaa"/>
<rect x="29" y="129.5" width="3" height="1.3" fill="#9cdcfe"/>
<rect x="33" y="129.5" width="10" height="1.3" fill="#cccccc"/>
<rect x="44" y="129.5" width="7" height="1.3" fill="#dcdcaa"/>
<rect x="52" y="129.5" width="5" height="1.3" fill="#dcdcaa"/>
<rect x="58" y="129.5" width="9" height="1.3" fill="#9cdcfe"/>
<rect x="68" y="129.5" width="4" height="1.3" fill="#cccccc"/>
<rect x="73" y="129.5" width="2" height="1.3" fill="#9cdcfe"/>
<rect x="76" y="129.5" width="10" height="1.3" fill="#cccccc"/>
<rect x="12" y="133.5" width="2" height="1.3" fill="#6a9955"/>
<rect x="15" y="133.5" width="4" height="1.3" fill="#6a9955"/>
<rect x="20" y="133.5" width="6" height="1.3" fill="#6a9955"/>
<rect x="27" y="133.5" width="10" height="1.3" fill="#6a9955"/>
<rect x="38" y="133.5" width="8" height="1.3" fill="#6a9955"/>
<rect x="12" y="135.5" width="8" height="1.3" fill="#4ec9b0"/>
<rect x="21" y="135.5" width="8" height="1.3" fill="#9cdcfe"/>
<rect x="30" y="135.5" width="4" height="1.3" fill="#cccccc"/>
<rect x="35" y="135.5" width="5" height="1.3" fill="#569cd6"/>
<rect x="12" y="137.5" width="5" height="1.3" fill="#4ec9b0"/>
<rect x="18" y="137.5" width="2" height="1.3" fill="#9cdcfe"/>
<rect x="21" y="137.5" width="8" height="1.3" fill="#cccccc"/>
<rect x="30" y="137.5" width="10" height="1.3" fill="#4ec9b0"/>
<rect x="12" y="139.5" width="9" height="1.3" fill="#9cdcfe"/>
<rect x="22" y="139.5" width="7" height="1.3" fill="#cccccc"/>
<rect x="30" y="139.5" width="5" height="1.3" fill="#569cd6"/>
<rect x="36" y="139.5" width="3" height="1.3" fill="#cccccc"/>
<rect x="40" y="139.5" width="2" height="1.3" fill="#9cdcfe"/>
<rect x="12" y="141.5" width="5" height="1.3" fill="#9cdcfe"/>
<rect x="18" y="141.5" width="5" height="1.3" fill="#cccccc"/>
<rect x="12" y="143.5" width="3" height="1.3" fill="#6a9955"/>
<rect x="16" y="143.5" width="6" height="1.3" fill="#6a9955"/>
<rect x="23" y="143.5" width="6" height="1.3" fill="#6a9955"/>
<rect x="30" y="143.5" width="7" height="1.3" fill="#6a9955"/>
<rect x="38" y="143.5" width="2" height="1.3" fill="#6a9955"/>
<rect x="41" y="143.5" width="5" height="1.3" fill="#6a9955"/>
<rect x="12" y="145.5" width="9" height="1.3" fill="#9cdcfe"/>
<rect x="22" y="145.5" width="2" height="1.3" fill="#cccccc"/>
<rect x="25" y="145.5" width="5" height="1.3" fill="#569cd6"/>
<rect x="31" y="145.5" width="3" height="1.3" fill="#cccccc"/>
<rect x="35" y="145.5" width="8" height="1.3" fill="#9cdcfe"/>
<rect x="12" y="147.5" width="1" height="1.3" fill="#cccccc"/>
<rect x="16" y="149.5" width="4" height="1.3" fill="#4ec9b0"/>
<rect x="21" y="149.5" width="10" height="1.3" fill="#9cdcfe"/>
<rect x="32" y="149.5" width="7" height="1.3" fill="#cccccc"/>
<rect x="40" y="149.5" width="4" height="1.3" fill="#569cd6"/>
<rect x="16" y="151.5" width="4" height="1.3" fill="#4ec9b0"/>
<rect x="21" y="151.5" width="10" height="1.3" fill="#9cdcfe"/>
<rect x="32" y="151.5" width="10" height="1.3" fill="#cccccc"/>
<rect x="43" y="151.5" width="3" height="1.3" fill="#4ec9b0"/>
<rect x="16" y="153.5" width="11" height="1.3" fill="#4ec9b0"/>
<rect x="28" y="153.5" width="3" height="1.3" fill="#9cdcfe"/>
<rect x="32" y="153.5" width="5" height="1.3" fill="#cccccc"/>
<rect x="38" y="153.5" width="6" height="1.3" fill="#4ec9b0"/>
<rect x="12" y="155.5" width="1" height="1.3" fill="#cccccc"/>
<rect x="8" y="157.5" width="3" height="1.3" fill="#c586c0"/>
<rect x="12" y="161.5" width="10" height="1.3" fill="#6a9955"/>
<rect x="23" y="161.5" width="10" height="1.3" fill="#6a9955"/>
<rect x="34" y="161.5" width="10" height="1.3" fill="#6a9955"/>
<rect x="45" y="161.5" width="10" height="1.3" fill="#6a9955"/>
<rect x="56" y="161.5" width="6" height="1.3" fill="#6a9955"/>
<rect x="63" y="161.5" width="9" height="1.3" fill="#6a9955"/>
<rect x="12" y="163.5" width="4" height="1.3" fill="#dcdcaa"/>
<rect x="17" y="163.5" width="10" height="1.3" fill="#9cdcfe"/>
<rect x="28" y="163.5" width="10" height="1.3" fill="#cccccc"/>
<rect x="39" y="163.5" width="6" height="1.3" fill="#9cdcfe"/>
<rect x="46" y="163.5" width="11" height="1.3" fill="#569cd6"/>
<rect x="58" y="163.5" width="9" height="1.3" fill="#cccccc"/>
<rect x="68" y="163.5" width="8" height="1.3" fill="#569cd6"/>
<rect x="77" y="163.5" width="3" height="1.3" fill="#569cd6"/>
<rect x="81" y="163.5" width="2" height="1.3" fill="#569cd6"/>
<rect x="84" y="163.5" width="8" height="1.3" fill="#cccccc"/>
<rect x="93" y="163.5" width="10" height="1.3" fill="#cccccc"/>
<rect x="104" y="163.5" width="8" height="1.3" fill="#9cdcfe"/>
<rect x="8" y="165.5" width="1" height="1.3" fill="#cccccc"/>
<rect x="8" y="169.5" width="10" height="1.3" fill="#569cd6"/>
<rect x="19" y="169.5" width="11" height="1.3" fill="#569cd6"/>
<rect x="31" y="169.5" width="3" height="1.3" fill="#dcdcaa"/>
<rect x="35" y="169.5" width="9" height="1.3" fill="#4ec9b0"/>
<rect x="45" y="169.5" width="3" height="1.3" fill="#9cdcfe"/>
<rect x="49" y="169.5" width="4" height="1.3" fill="#cccccc"/>
<rect x="54" y="169.5" width="3" height="1.3" fill="#4ec9b0"/>
<rect x="58" y="169.5" width="4" height="1.3" fill="#9cdcfe"/>
<rect x="8" y="171.5" width="1" height="1.3" fill="#cccccc"/>
<rect x="12" y="173.5" width="8" height="1.3" fill="#4ec9b0"/>
<rect x="21" y="173.5" width="8" height="1.3" fill="#9cdcfe"/>
<rect x="30" y="173.5" width="6" height="1.3" fill="#cccccc"/>
<rect x="37" y="173.5" width="5" height="1.3" fill="#4ec9b0"/>
<rect x="43" y="173.5" width="9" height="1.3" fill="#9cdcfe"/>
<rect x="53" y="173.5" width="9" height="1.3" fill="#dcdcaa"/>
<rect x="63" y="173.5" width="4" height="1.3" fill="#9cdcfe"/>
<rect x="68" y="173.5" width="8" height="1.3" fill="#9cdcfe"/>
<rect x="77" y="173.5" width="10" height="1.3" fill="#9cdcfe"/>
<rect x="88" y="173.5" width="1" height="1.3" fill="#4ec9b0"/>
<rect x="12" y="177.5" width="11" height="1.3" fill="#4ec9b0"/>
<rect x="24" y="177.5" width="2" height="1.3" fill="#9cdcfe"/>
<rect x="27" y="177.5" width="6" height="1.3" fill="#cccccc"/>
<rect x="12" y="179.5" width="1" height="1.3" fill="#cccccc"/>
<rect x="12" y="181.5" width="4" height="1.3" fill="#c586c0"/>
<rect x="17" y="181.5" width="17" height="1.3" fill="#569cd6"/>
<rect x="16" y="183.5" width="4" height="1.3" fill="#6a9955"/>
<rect x="21" y="183.5" width="2" height="1.3" fill="#6a9955"/>
<rect x="24" y="183.5" width="5" height="1.3" fill="#6a9955"/>
<rect x="30" y="183.5" width="5" height="1.3" fill="#6a9955"/>
<rect x="36" y="183.5" width="1" height="1.3" fill="#6a9955"/>
<rect x="16" y="185.5" width="7" height="1.3" fill="#569cd6"/>
<rect x="24" y="185.5" width="5" height="1.3" fill="#dcdcaa"/>
<rect x="30" y="185.5" width="11" height="1.3" fill="#9cdcfe"/>
<rect x="42" y="185.5" width="9" height="1.3" fill="#9cdcfe"/>
<rect x="52" y="185.5" width="3" height="1.3" fill="#cccccc"/>
<rect x="56" y="185.5" width="2" height="1.3" fill="#cccccc"/>
<rect x="16" y="187.5" width="3" height="1.3" fill="#569cd6"/>
<rect x="20" y="187.5" width="10" height="1.3" fill="#dcdcaa"/>
<rect x="31" y="187.5" width="11" height="1.3" fill="#9cdcfe"/>
<rect x="43" y="187.5" width="6" height="1.3" fill="#9cdcfe"/>
<rect x="50" y="187.5" width="5" height="1.3" fill="#cccccc"/>
<rect x="56" y="187.5" width="8" height="1.3" fill="#9cdcfe"/>
<rect x="16" y="189.5" width="5" height="1.3" fill="#c586c0"/>
<rect x="12" y="191.5" width="4" height="1.3" fill="#c586c0"/>
<rect x="17" y="191.5" width="15" height="1.3" fill="#569cd6"/>
<rect x="16" y="193.5" width="2" height="1.3" fill="#6a9955"/>
<rect x="19" y="193.5" width="8" height="1.3" fill="#6a9955"/>
<rect x="28" y="193.5" width="9" height="1.3" fill="#6a9955"/>
<rect x="16" y="195.5" width="5" height="1.3" fill="#569cd6"/>
<rect x="22" y="195.5" width="10" height="1.3" fill="#dcdcaa"/>
<rect x="33" y="195.5" width="5" height="1.3" fill="#9cdcfe"/>
<rect x="39" y="195.5" width="10" height="1.3" fill="#9cdcfe"/>
<rect x="50" y="195.5" width="5" height="1.3" fill="#cccccc"/>
<rect x="56" y="195.5" width="2" height="1.3" fill="#cccccc"/>
<rect x="16" y="197.5" width="4" height="1.3" fill="#569cd6"/>
<rect x="21" y="197.5" width="5" height="1.3" fill="#dcdcaa"/>
<rect x="27" y="197.5" width="7" height="1.3" fill="#9cdcfe"/>
<rect x="35" y="197.5" width="4" height="1.3" fill="#9cdcfe"/>
<rect x="40" y="197.5" width="7" height="1.3" fill="#cccccc"/>
<rect x="48" y="197.5" width="11" height="1.3" fill="#9cdcfe"/>
<rect x="60" y="197.5" width="3" height="1.3" fill="#9cdcfe"/>
<rect x="16" y="199.5" width="5" height="1.3" fill="#c586c0"/>
<rect x="12" y="201.5" width="4" height="1.3" fill="#c586c0"/>
<rect x="17" y="201.5" width="15" height="1.3" fill="#569cd6"/>
<rect x="16" y="203.5" width="5" height="1.3" fill="#6a9955"/>
<rect x="22" y="203.5" width="3" height="1.3" fill="#6a9955"/>
<rect x="26" y="203.5" width="5" height="1.3" fill="#6a9955"/>
<rect x="32" y="203.5" width="3" height="1.3" fill="#6a9955"/>
<rect x="36" y="203.5" width="1" height="1.3" fill="#6a9955"/>
<rect x="16" y="205.5" width="8" height="1.3" fill="#dcdcaa"/>
<rect x="25" y="205.5" width="10" height="1.3" fill="#9cdcfe"/>
<rect x="36" y="205.5" width="4" height="1.3" fill="#cccccc"/>
<rect x="41" y="205.5" width="5" height="1.3" fill="#9cdcfe"/>
<rect x="47" y="205.5" width="8" height="1.3" fill="#569cd6"/>
<rect x="56" y="205.5" width="2" height="1.3" fill="#cccccc"/>
<rect x="16" y="207.5" width="11" height="1.3" fill="#569cd6"/>
<rect x="28" y="207.5" width="7" height="1.3" fill="#dcdcaa"/>
<rect x="36" y="207.5" width="7" height="1.3" fill="#9cdcfe"/>
<rect x="44" y="207.5" width="3" height="1.3" fill="#cccccc"/>
<rect x="48" y="207.5" width="10" height="1.3" fill="#9cdcfe"/>
<rect x="59" y="207.5" width="5" height="1.3" fill="#569cd6"/>
<rect x="16" y="209.5" width="5" height="1.3" fill="#c586c0"/>
<rect x="12" y="211.5" width="4" height="1.3" fill="#c586c0"/>
<rect x="17" y="211.5" width="15" height="1.3" fill="#569cd6"/>
<rect x="16" y="213.5" width="10" height="1.3" fill="#6a9955"/>
<rect x="27" y="213.5" width="5" height="1.3" fill="#6a9955"/>
<rect x="33" y="213.5" width="4" height="1.3" fill="#6a9955"/>
<rect x="16" y="215.5" width="2" height="1.3" fill="#569cd6"/>
<rect x="19" y="215.5" width="10" height="1.3" fill="#dcdcaa"/>
<rect x="30" y="215.5" width="11" height="1.3" fill="#9cdcfe"/>
<rect x="42" y="215.5" width="10" height="1.3" fill="#cccccc"/>
<rect x="53" y="215.5" width="5" height="1.3" fill="#9cdcfe"/>
<rect x="16" y="217.5" width="4" height="1.3" fill="#dcdcaa"/>
<rect x="21" y="217.5" width="5" height="1.3" fill="#9cdcfe"/>
<rect x="27" y="217.5" width="4" height="1.3" fill="#cccccc"/>
<rect x="32" y="217.5" width="3" height="1.3" fill="#9cdcfe"/>
<rect x="36" y="217.5" width="5" height="1.3" fill="#569cd6"/>
<rect x="42" y="217.5" width="4" height="1.3" fill="#cccccc"/>
<rect x="47" y="217.5" width="6" height="1.3" fill="#569cd6"/>
<rect x="54" y="217.5" width="3" height="1.3" fill="#569cd6"/>
<rect x="58" y="217.5" width="2" height="1.3" fill="#cccccc"/>
<rect x="61" y="217.5" width="4" height="1.3" fill="#cccccc"/>
<rect x="16" y="219.5" width="5" height="1.3" fill="#c586c0"/>
<rect x="12" y="221.5" width="1" height="1.3" fill="#cccccc"/>
<rect x="8" y="223.5" width="1" height="1.3" fill="#cccccc"/>
<rect x="8" y="227.5" width="3" height="1.3" fill="#569cd6"/>
<rect x="12" y="227.5" width="7" height="1.3" fill="#569cd6"/>
<rect x="20" y="227.5" width="8" height="1.3" fill="#dcdcaa"/>
<rect x="29" y="227.5" width="9" height="1.3" fill="#4ec9b0"/>
<rect x="39" y="227.5" width="8" height="1.3" fill="#9cdcfe"/>
<rect x="48" y="227.5" width="10" height="1.3" fill="#cccccc"/>
<rect x="59" y="227.5" width="7" height="1.3" fill="#4ec9b0"/>
<rect x="67" y="227.5" width="8" height="1.3" fill="#9cdcfe"/>
<rect x="76" y="227.5" width="5" height="1.3" fill="#cccccc"/>
<rect x="82" y="227.5" width="4" height="1.3" fill="#9cdcfe"/>
<rect x="8" y="229.5" width="1" height="1.3" fill="#cccccc"/>
<rect x="12" y="231.5" width="2" height="1.3" fill="#4ec9b0"/>
<rect x="15" y="231.5" width="5" height="1.3" fill="#9cdcfe"/>
<rect x="21" y="231.5" width="4" height="1.3" fill="#cccccc"/>
<rect x="26" y="231.5" width="8" height="1.3" fill="#569cd6"/>
<rect x="12" y="233.5" width="7" height="1.3" fill="#4ec9b0"/>
<rect x="20" y="233.5" width="7" height="1.3" fill="#9cdcfe"/>
<rect x="28" y="233.5" width="7" height="1.3" fill="#cccccc"/>
<rect x="12" y="237.5" width="11" height="1.3" fill="#9cdcfe"/>
<rect x="24" y="237.5" width="4" height="1.3" fill="#cccccc"/>
<rect x="29" y="237.5" width="3" height="1.3" fill="#dcdcaa"/>
<rect x="33" y="237.5" width="2" height="1.3" fill="#9cdcfe"/>
<rect x="12" y="239.5" width="7" height="1.3" fill="#4ec9b0"/>
<rect x="20" y="239.5" width="3" height="1.3" fill="#9cdcfe"/>
<rect x="24" y="239.5" width="8" height="1.3" fill="#cccccc"/>
<rect x="33" y="239.5" width="2" height="1.3" fill="#569cd6"/>
<rect x="12" y="243.5" width="11" height="1.3" fill="#6a9955"/>
<rect x="24" y="243.5" width="5" height="1.3" fill="#6a9955"/>
<rect x="30" y="243.5" width="6" height="1.3" fill="#6a9955"/>
<rect x="37" y="243.5" width="3" height="1.3" fill="#6a9955"/>
<rect x="41" y="243.5" width="8" height="1.3" fill="#6a9955"/>
<rect x="50" y="243.5" width="7" height="1.3" fill="#6a9955"/>
<rect x="58" y="243.5" width="8" height="1.3" fill="#6a9955"/>
<rect x="67" y="243.5" width="7" height="1.3" fill="#6a9955"/>
<rect x="12" y="245.5" width="3" height="1.3" fill="#9cdcfe"/>
<rect x="16" y="245.5" width="7" height="1.3" fill="#cccccc"/>
<rect x="24" y="245.5" width="6" height="1.3" fill="#dcdcaa"/>
<rect x="31" y="245.5" width="7" height="1.3" fill="#9cdcfe"/>
<rect x="12" y="247.5" width="3" height="1.3" fill="#6a9955"/>
<rect x="16" y="247.5" width="2" height="1.3" fill="#6a9955"/>
<rect x="19" y="247.5" width="11" height="1.3" fill="#6a9955"/>
<rect x="31" y="247.5" width="5" height="1.3" fill="#6a9955"/>
<rect x="37" y="247.5" width="6" height="1.3" fill="#6a9955"/>
<rect x="44" y="247.5" width="5" height="1.3" fill="#6a9955"/>
<rect x="50" y="247.5" width="11" height="1.3" fill="#6a9955"/>
<rect x="62" y="247.5" width="10" height="1.3" fill="#6a9955"/>
<rect x="12" y="249.5" width="10" height="1.3" fill="#4ec9b0"/>
<rect x="23" y="249.5" width="9" height="1.3" fill="#9cdcfe"/>
<rect x="33" y="249.5" width="5" height="1.3" fill="#cccccc"/>
<rect x="12" y="251.5" width="8" height="1.3" fill="#4ec9b0"/>
<rect x="21" y="251.5" width="11" height="1.3" fill="#9cdcfe"/>
<rect x="33" y="251.5" width="2" height="1.3" fill="#cccccc"/>
<rect x="36" y="251.5" width="3" height="1.3" fill="#569cd6"/>
<rect x="40" y="251.5" width="4" height="1.3" fill="#9cdcfe"/>
<rect x="8" y="253.5" width="1" height="1.3" fill="#cccccc"/>
<rect x="8" y="259.5" width="6" height="1.3" fill="#c586c0"/>
<rect x="15" y="259.5" width="14" height="1.3" fill="#569cd6"/>
<rect x="8" y="261.5" width="3" height="1.3" fill="#569cd6"/>
<rect x="12" y="261.5" width="5" height="1.3" fill="#569cd6"/>
<rect x="18" y="261.5" width="6" height="1.3" fill="#dcdcaa"/>
<rect x="25" y="261.5" width="9" height="1.3" fill="#4ec9b0"/>
<rect x="35" y="261.5" width="8" height="1.3" fill="#9cdcfe"/>
<rect x="44" y="261.5" width="10" height="1.3" fill="#cccccc"/>
<rect x="55" y="261.5" width="2" height="1.3" fill="#4ec9b0"/>
<rect x="58" y="261.5" width="5" height="1.3" fill="#9cdcfe"/>
<rect x="64" y="261.5" width="8" height="1.3" fill="#cccccc"/>
<rect x="73" y="261.5" width="2" height="1.3" fill="#4ec9b0"/>
<rect x="76" y="261.5" width="6" height="1.3" fill="#9cdcfe"/>
<rect x="83" y="261.5" width="2" height="1.3" fill="#9cdcfe"/>
<rect x="8" y="263.5" width="1" height="1.3" fill="#cccccc"/>
<rect x="12" y="265.5" width="10" height="1.3" fill="#4ec9b0"/>
<rect x="23" y="265.5" width="11" height="1.3" fill="#9cdcfe"/>
<rect x="35" y="265.5" width="3" height="1.3" fill="#cccccc"/>
<rect x="39" y="265.5" width="9" height="1.3" fill="#4ec9b0"/>
<rect x="49" y="265.5" width="3" height="1.3" fill="#9cdcfe"/>
<rect x="53" y="265.5" width="1" height="1.3" fill="#dcdcaa"/>
<rect x="12" y="267.5" width="8" height="1.3" fill="#4ec9b0"/>
<rect x="21" y="267.5" width="3" height="1.3" fill="#9cdcfe"/>
<rect x="16" y="273.5" width="5" height="1.3" fill="#c586c0"/>
<rect x="22" y="273.5" width="8" height="1.3" fill="#9cdcfe"/>
<rect x="31" y="273.5" width="9" height="1.3" fill="#cccccc"/>
<rect x="41" y="273.5" width="2" height="1.3" fill="#569cd6"/>
<rect x="16" y="275.5" width="1" height="1.3" fill="#cccccc"/>
<rect x="20" y="277.5" width="10" height="1.3" fill="#4ec9b0"/>
<rect x="31" y="277.5" width="10" height="1.3" fill="#9cdcfe"/>
<rect x="20" y="279.5" width="8" height="1.3" fill="#4ec9b0"/>
<rect x="29" y="279.5" width="9" height="1.3" fill="#9cdcfe"/>
<rect x="39" y="279.5" width="1" height="1.3" fill="#cccccc"/>
<rect x="20" y="281.5" width="10" height="1.3" fill="#9cdcfe"/>
<rect x="31" y="281.5" width="8" height="1.3" fill="#cccccc"/>
<rect x="40" y="281.5" width="11" height="1.3" fill="#569cd6"/>
<rect x="52" y="281.5" width="4" height="1.3" fill="#cccccc"/>
<rect x="20" y="283.5" width="12" height="1.3" fill="#dcdcaa"/>
<rect x="32" y="283.5" width="2" height="1.3" fill="#9cdcfe"/>
<rect x="35" y="283.5" width="26" height="1.3" fill="#ce9178"/>
<rect x="62" y="283.5" width="11" height="1.3" fill="#cccccc"/>
<rect x="16" y="285.5" width="1" height="1.3" fill="#cccccc"/>
<rect x="12" y="287.5" width="1" height="1.3" fill="#cccccc"/>
<rect x="12" y="289.5" width="4" height="1.3" fill="#c586c0"/>
<rect x="12" y="291.5" width="1" height="1.3" fill="#cccccc"/>
<rect x="16" y="293.5" width="9" height="1.3" fill="#9cdcfe"/>
<rect x="26" y="293.5" width="6" height="1.3" fill="#cccccc"/>
<rect x="33" y="293.5" width="10" height="1.3" fill="#569cd6"/>
<rect x="44" y="293.5" width="6" height="1.3" fill="#cccccc"/>
<rect x="51" y="293.5" width="3" height="1.3" fill="#9cdcfe"/>
<rect x="12" y="295.5" width="1" height="1.3" fill="#cccccc"/>
<rect x="8" y="297.5" width="1" height="1.3" fill="#cccccc"/>
<rect x="8" y="299.5" width="3" height="1.3" fill="#c586c0"/>
<rect x="8" y="303.5" width="2" height="1.3" fill="#569cd6"/>
<rect x="11" y="303.5" width="2" height="1.3" fill="#569cd6"/>
<rect x="14" y="303.5" width="5" height="1.3" fill="#dcdcaa"/>
<rect x="20" y="303.5" width="11" height="1.3" fill="#4ec9b0"/>
<rect x="32" y="303.5" width="2" height="1.3" fill="#9cdcfe"/>
<rect x="35" y="303.5" width="4" height="1.3" fill="#cccccc"/>
<rect x="40" y="303.5" width="8" height="1.3" fill="#4ec9b0"/>
<rect x="49" y="303.5" width="8" height="1.3" fill="#9cdcfe"/>
<rect x="8" y="305.5" width="1" height="1.3" fill="#cccccc"/>
<rect x="12" y="307.5" width="2" height="1.3" fill="#6a9955"/>
<rect x="15" y="307.5" width="7" height="1.3" fill="#6a9955"/>
<rect x="23" y="307.5" width="2" height="1.3" fill="#6a9955"/>
<rect x="26" y="307.5" width="3" height="1.3" fill="#6a9955"/>
<rect x="30" y="307.5" width="8" height="1.3" fill="#6a9955"/>
<rect x="39" y="307.5" width="6" height="1.3" fill="#6a9955"/>
<rect x="46" y="307.5" width="2" height="1.3" fill="#6a9955"/>
<rect x="49" y="307.5" width="9" height="1.3" fill="#6a9955"/>
<rect x="59" y="307.5" width="2" height="1.3" fill="#6a9955"/>
<rect x="12" y="309.5" width="11" height="1.3" fill="#569cd6"/>
<rect x="24" y="309.5" width="8" height="1.3" fill="#dcdcaa"/>
<rect x="33" y="309.5" width="9" height="1.3" fill="#9cdcfe"/>
<rect x="43" y="309.5" width="3" height="1.3" fill="#cccccc"/>
<rect x="47" y="309.5" width="5" height="1.3" fill="#9cdcfe"/>
<rect x="8" y="311.5" width="1" height="1.3" fill="#cccccc"/>
<rect x="8" y="315.5" width="2" height="1.3" fill="#569cd6"/>
<rect x="11" y="315.5" width="7" height="1.3" fill="#569cd6"/>
<rect x="19" y="315.5" width="10" height="1.3" fill="#dcdcaa"/>
<rect x="30" y="315.5" width="4" height="1.3" fill="#4ec9b0"/>
<rect x="35" y="315.5" width="3" height="1.3" fill="#9cdcfe"/>
<rect x="39" y="315.5" width="7" height="1.3" fill="#cccccc"/>
<rect x="47" y="315.5" width="6" height="1.3" fill="#4ec9b0"/>
<rect x="8" y="317.5" width="1" height="1.3" fill="#cccccc"/>
<rect x="12" y="319.5" width="12" height="1.3" fill="#569cd6"/>
<rect x="24" y="319.5" width="2" height="1.3" fill="#9cdcfe"/>
<rect x="27" y="319.5" width="32" height="1.3" fill="#ce9178"/>
<rect x="60" y="319.5" width="13" height="1.3" fill="#cccccc"/>
<rect x="12" y="323.5" width="9" height="1.3" fill="#4ec9b0"/>
<rect x="22" y="323.5" width="11" height="1.3" fill="#9cdcfe"/>
<rect x="34" y="323.5" width="6" height="1.3" fill="#cccccc"/>
<rect x="41" y="323.5" width="11" height="1.3" fill="#4ec9b0"/>
<rect x="53" y="323.5" width="8" height="1.3" fill="#9cdcfe"/>
<rect x="62" y="323.5" width="7" height="1.3" fill="#dcdcaa"/>
<rect x="70" y="323.5" width="10" height="1.3" fill="#4ec9b0"/>
<rect x="81" y="323.5" width="6" height="1.3" fill="#dcdcaa"/>
<rect x="88" y="323.5" width="4" height="1.3" fill="#4ec9b0"/>
<rect x="93" y="323.5" width="9" height="1.3" fill="#4ec9b0"/>
<rect x="103" y="323.5" width="4" height="1.3" fill="#9cdcfe"/>
<rect x="16" y="325.5" width="6" height="1.3" fill="#9cdcfe"/>
<rect x="23" y="325.5" width="6" height="1.3" fill="#cccccc"/>
<rect x="30" y="325.5" width="11" height="1.3" fill="#569cd6"/>
<rect x="42" y="325.5" width="11" height="1.3" fill="#cccccc"/>
<rect x="54" y="325.5" width="11" height="1.3" fill="#9cdcfe"/>
<rect x="66" y="325.5" width="3" height="1.3" fill="#9cdcfe"/>
<rect x="8" y="327.5" width="1" height="1.3" fill="#cccccc"/>
<rect x="8" y="331.5" width="6" height="1.3" fill="#569cd6"/>
<rect x="15" y="331.5" width="5" height="1.3" fill="#569cd6"/>
<rect x="21" y="331.5" width="5" height="1.3" fill="#dcdcaa"/>
<rect x="27" y="331.5" width="5" height="1.3" fill="#4ec9b0"/>
<rect x="33" y="331.5" width="10" height="1.3" fill="#9cdcfe"/>
<rect x="44" y="331.5" width="1" height="1.3" fill="#cccccc"/>
<rect x="8" y="333.5" width="1" height="1.3" fill="#cccccc"/>
<rect x="12" y="335.5" width="12" height="1.3" fill="#569cd6"/>
<rect x="24" y="335.5" width="2" height="1.3" fill="#9cdcfe"/>
<rect x="27" y="335.5" width="32" height="1.3" fill="#ce9178"/>
<rect x="60" y="335.5" width="13" height="1.3" fill="#cccccc"/>
<rect x="12" y="337.5" width="2" height="1.3" fill="#569cd6"/>
<rect x="15" y="337.5" width="2" height="1.3" fill="#dcdcaa"/>
<rect x="18" y="337.5" width="6" height="1.3" fill="#9cdcfe"/>
<rect x="25" y="337.5" width="6" height="1.3" fill="#9cdcfe"/>
<rect x="32" y="337.5" width="4" height="1.3" fill="#cccccc"/>
<rect x="8" y="339.5" width="1" height="1.3" fill="#cccccc"/>
<rect x="8" y="343.5" width="2" height="1.3" fill="#569cd6"/>
<rect x="11" y="343.5" width="11" height="1.3" fill="#569cd6"/>
<rect x="23" y="343.5" width="2" height="1.3" fill="#dcdcaa"/>
<rect x="26" y="343.5" width="3" height="1.3" fill="#4ec9b0"/>
<rect x="30" y="343.5" width="5" height="1.3" fill="#9cdcfe"/>
<rect x="36" y="343.5" width="10" height="1.3" fill="#cccccc"/>
<rect x="47" y="343.5" width="6" height="1.3" fill="#4ec9b0"/>
<rect x="8" y="345.5" width="1" height="1.3" fill="#cccccc"/>
<rect x="12" y="347.5" width="12" height="1.3" fill="#569cd6"/>
<rect x="24" y="347.5" width="2" height="1.3" fill="#9cdcfe"/>
<rect x="27" y="347.5" width="14" height="1.3" fill="#ce9178"/>
<rect x="42" y="347.5" width="6" height="1.3" fill="#cccccc"/>
<rect x="12" y="349.5" width="4" height="1.3" fill="#4ec9b0"/>
<rect x="17" y="349.5" width="10" height="1.3" fill="#9cdcfe"/>
<rect x="28" y="349.5" width="5" height="1.3" fill="#cccccc"/>
<rect x="34" y="349.5" width="7" height="1.3" fill="#569cd6"/>
<rect x="42" y="349.5" width="9" height="1.3" fill="#9cdcfe"/>
<rect x="52" y="349.5" width="9" height="1.3" fill="#569cd6"/>
<rect x="62" y="349.5" width="5" height="1.3" fill="#569cd6"/>
<rect x="12" y="351.5" width="5" height="1.3" fill="#c586c0"/>
<rect x="18" y="351.5" width="3" height="1.3" fill="#9cdcfe"/>
<rect x="12" y="353.5" width="1" height="1.3" fill="#cccccc"/>
<rect x="16" y="355.5" width="9" height="1.3" fill="#6a9955"/>
<rect x="26" y="355.5" width="4" height="1.3" fill="#6a9955"/>
<rect x="31" y="355.5" width="3" height="1.3" fill="#6a9955"/>
<rect x="35" y="355.5" width="11" height="1.3" fill="#6a9955"/>
<rect x="47" y="355.5" width="9" height="1.3" fill="#6a9955"/>
<rect x="57" y="355.5" width="6" height="1.3" fill="#6a9955"/>
<rect x="64" y="355.5" width="4" height="1.3" fill="#6a9955"/>
<rect x="69" y="355.5" width="4" height="1.3" fill="#6a9955"/>
<rect x="16" y="357.5" width="5" height="1.3" fill="#c586c0"/>
<rect x="22" y="357.5" width="6" height="1.3" fill="#9cdcfe"/>
<rect x="29" y="357.5" width="10" height="1.3" fill="#cccccc"/>
<rect x="40" y="357.5" width="1" height="1.3" fill="#569cd6"/>
<rect x="16" y="359.5" width="1" height="1.3" fill="#cccccc"/>
<rect x="20" y="361.5" width="7" height="1.3" fill="#4ec9b0"/>
<rect x="28" y="361.5" width="11" height="1.3" fill="#9cdcfe"/>
<rect x="40" y="361.5" width="3" height="1.3" fill="#cccccc"/>
<rect x="44" y="361.5" width="9" height="1.3" fill="#4ec9b0"/>
<rect x="54" y="361.5" width="1" height="1.3" fill="#9cdcfe"/>
<rect x="20" y="363.5" width="3" height="1.3" fill="#6a9955"/>
<rect x="24" y="363.5" width="10" height="1.3" fill="#6a9955"/>
<rect x="35" y="363.5" width="2" height="1.3" fill="#6a9955"/>
<rect x="20" y="365.5" width="9" height="1.3" fill="#569cd6"/>
<rect x="30" y="365.5" width="6" height="1.3" fill="#dcdcaa"/>
<rect x="37" y="365.5" width="2" height="1.3" fill="#9cdcfe"/>
<rect x="40" y="365.5" width="1" height="1.3" fill="#9cdcfe"/>
<rect x="16" y="367.5" width="1" height="1.3" fill="#cccccc"/>
<rect x="16" y="369.5" width="5" height="1.3" fill="#c586c0"/>
<rect x="22" y="369.5" width="6" height="1.3" fill="#9cdcfe"/>
<rect x="29" y="369.5" width="5" height="1.3" fill="#cccccc"/>
<rect x="35" y="369.5" width="11" height="1.3" fill="#569cd6"/>
<rect x="47" y="369.5" width="3" height="1.3" fill="#9cdcfe"/>
<rect x="51" y="369.5" width="6" height="1.3" fill="#569cd6"/>
<rect x="58" y="369.5" width="7" height="1.3" fill="#569cd6"/>
<rect x="66" y="369.5" width="1" height="1.3" fill="#cccccc"/>
<rect x="16" y="371.5" width="1" height="1.3" fill="#cccccc"/>
<rect x="20" y="373.5" width="7" height="1.3" fill="#9cdcfe"/>
<rect x="28" y="373.5" width="7" height="1.3" fill="#cccccc"/>
<rect x="36" y="373.5" width="3" height="1.3" fill="#569cd6"/>
<rect x="40" y="373.5" width="7" height="1.3" fill="#cccccc"/>
<rect x="48" y="373.5" width="9" height="1.3" fill="#9cdcfe"/>
<rect x="58" y="373.5" width="9" height="1.3" fill="#9cdcfe"/>
<rect x="16" y="375.5" width="1" height="1.3" fill="#cccccc"/>
<rect x="16" y="377.5" width="5" height="1.3" fill="#c586c0"/>
<rect x="22" y="377.5" width="6" height="1.3" fill="#9cdcfe"/>
<rect x="29" y="377.5" width="9" height="1.3" fill="#cccccc"/>
<rect x="39" y="377.5" width="10" height="1.3" fill="#569cd6"/>
<rect x="50" y="377.5" width="6" height="1.3" fill="#9cdcfe"/>
<rect x="57" y="377.5" width="9" height="1.3" fill="#569cd6"/>
<rect x="67" y="377.5" width="5" height="1.3" fill="#569cd6"/>
<rect x="16" y="379.5" width="1" height="1.3" fill="#cccccc"/>
<rect x="20" y="381.5" width="3" height="1.3" fill="#9cdcfe"/>
<rect x="24" y="381.5" width="7" height="1.3" fill="#cccccc"/>
<rect x="32" y="381.5" width="7" height="1.3" fill="#dcdcaa"/>
<rect x="40" y="381.5" width="2" height="1.3" fill="#9cdcfe"/>
<rect x="43" y="381.5" width="7" height="1.3" fill="#cccccc"/>
<rect x="51" y="381.5" width="8" height="1.3" fill="#cccccc"/>
<rect x="60" y="381.5" width="7" height="1.3" fill="#dcdcaa"/>
<rect x="16" y="383.5" width="1" height="1.3" fill="#cccccc"/>
<rect x="16" y="385.5" width="11" height="1.3" fill="#569cd6"/>
<rect x="28" y="385.5" width="7" height="1.3" fill="#dcdcaa"/>
<rect x="36" y="385.5" width="8" height="1.3" fill="#9cdcfe"/>
<rect x="45" y="385.5" width="10" height="1.3" fill="#9cdcfe"/>
<rect x="12" y="387.5" width="1" height="1.3" fill="#cccccc"/>
<rect x="8" y="389.5" width="1" height="1.3" fill="#cccccc"/>
<rect x="8" y="393.5" width="4" height="1.3" fill="#569cd6"/>
<rect x="13" y="393.5" width="11" height="1.3" fill="#569cd6"/>
<rect x="25" y="393.5" width="11" height="1.3" fill="#dcdcaa"/>
<rect x="37" y="393.5" width="1" height="1.3" fill="#4ec9b0"/>
<rect x="8" y="395.5" width="1" height="1.3" fill="#cccccc"/>
<rect x="12" y="397.5" width="4" height="1.3" fill="#569cd6"/>
<rect x="17" y="397.5" width="3" height="1.3" fill="#4ec9b0"/>
<rect x="21" y="397.5" width="9" height="1.3" fill="#9cdcfe"/>
<rect x="31" y="397.5" width="6" height="1.3" fill="#569cd6"/>
<rect x="38" y="397.5" width="5" height="1.3" fill="#9cdcfe"/>
<rect x="44" y="397.5" width="2" height="1.3" fill="#9cdcfe"/>
<rect x="47" y="397.5" width="4" height="1.3" fill="#9cdcfe"/>
<rect x="52" y="397.5" width="3" height="1.3" fill="#569cd6"/>
<rect x="56" y="397.5" width="8" height="1.3" fill="#6a9955"/>
<rect x="65" y="397.5" width="3" height="1.3" fill="#6a9955"/>
<rect x="69" y="397.5" width="6" height="1.3" fill="#6a9955"/>
<rect x="76" y="397.5" width="3" height="1.3" fill="#6a9955"/>
<rect x="80" y="397.5" width="7" height="1.3" fill="#6a9955"/>
<rect x="88" y="397.5" width="3" height="1.3" fill="#6a9955"/>
<rect x="92" y="397.5" width="6" height="1.3" fill="#6a9955"/>
<rect x="99" y="397.5" width="3" height="1.3" fill="#6a9955"/>
<rect x="103" y="397.5" width="5" height="1.3" fill="#6a9955"/>
<rect x="12" y="399.5" width="3" height="1.3" fill="#569cd6"/>
<rect x="16" y="399.5" width="2" height="1.3" fill="#569cd6"/>
<rect x="19" y="399.5" width="4" height="1.3" fill="#dcdcaa"/>
<rect x="24" y="399.5" width="3" height="1.3" fill="#4ec9b0"/>
<rect x="28" y="399.5" width="8" height="1.3" fill="#9cdcfe"/>
<rect x="37" y="399.5" width="5" height="1.3" fill="#cccccc"/>
<rect x="43" y="399.5" width="5" height="1.3" fill="#4ec9b0"/>
<rect x="49" y="399.5" width="9" height="1.3" fill="#9cdcfe"/>
<rect x="59" y="399.5" width="10" height="1.3" fill="#cccccc"/>
<rect x="70" y="399.5" width="7" height="1.3" fill="#9cdcfe"/>
<rect x="8" y="403.5" width="6" height="1.3" fill="#c586c0"/>
<rect x="15" y="403.5" width="26" height="1.3" fill="#569cd6"/>
<rect x="12" y="405.5" width="7" height="1.3" fill="#4ec9b0"/>
<rect x="20" y="405.5" width="7" height="1.3" fill="#9cdcfe"/>
<rect x="28" y="405.5" width="7" height="1.3" fill="#cccccc"/>
<rect x="36" y="405.5" width="4" height="1.3" fill="#4ec9b0"/>
<rect x="41" y="405.5" width="9" height="1.3" fill="#9cdcfe"/>
<rect x="51" y="405.5" width="1" height="1.3" fill="#dcdcaa"/>
<rect x="12" y="407.5" width="11" height="1.3" fill="#4ec9b0"/>
<rect x="24" y="407.5" width="2" height="1.3" fill="#9cdcfe"/>
<rect x="27" y="407.5" width="8" height="1.3" fill="#cccccc"/>
<rect x="36" y="407.5" width="7" height="1.3" fill="#569cd6"/>
<rect x="16" y="409.5" width="8" height="1.3" fill="#4ec9b0"/>
<rect x="25" y="409.5" width="3" height="1.3" fill="#9cdcfe"/>
<rect x="29" y="409.5" width="9" height="1.3" fill="#cccccc"/>
<rect x="39" y="409.5" width="2" height="1.3" fill="#569cd6"/>
<rect x="16" y="411.5" width="10" height="1.3" fill="#4ec9b0"/>
<rect x="27" y="411.5" width="7" height="1.3" fill="#9cdcfe"/>
<rect x="35" y="411.5" width="2" height="1.3" fill="#cccccc"/>
<rect x="38" y="411.5" width="3" height="1.3" fill="#569cd6"/>
<rect x="42" y="411.5" width="8" height="1.3" fill="#9cdcfe"/>
<rect x="51" y="411.5" width="8" height="1.3" fill="#cccccc"/>
<rect x="60" y="411.5" width="5" height="1.3" fill="#9cdcfe"/>
<rect x="12" y="413.5" width="8" height="1.3" fill="#569cd6"/>
<rect x="21" y="413.5" width="4" height="1.3" fill="#dcdcaa"/>
<rect x="26" y="413.5" width="7" height="1.3" fill="#9cdcfe"/>
<rect x="34" y="413.5" width="5" height="1.3" fill="#cccccc"/>
<rect x="40" y="413.5" width="8" height="1.3" fill="#9cdcfe"/>
<rect x="49" y="413.5" width="8" height="1.3" fill="#569cd6"/>
<rect x="8" y="415.5" width="3" height="1.3" fill="#c586c0"/>
<rect x="12" y="419.5" width="12" height="1.3" fill="#dcdcaa"/>
<rect x="24" y="419.5" width="2" height="1.3" fill="#9cdcfe"/>
<rect x="27" y="419.5" width="14" height="1.3" fill="#ce9178"/>
<rect x="42" y="419.5" width="6" height="1.3" fill="#cccccc"/>
<rect x="12" y="421.5" width="2" height="1.3" fill="#9cdcfe"/>
<rect x="15" y="421.5" width="9" height="1.3" fill="#cccccc"/>
<rect x="25" y="421.5" width="6" height="1.3" fill="#569cd6"/>
<rect x="32" y="421.5" width="2" height="1.3" fill="#cccccc"/>
<rect x="12" y="423.5" width="6" height="1.3" fill="#cccccc"/>
<rect x="19" y="423.5" width="4" height="1.3" fill="#b5cea8"/>
<rect x="24" y="423.5" width="4" height="1.3" fill="#4ec9b0"/>
<rect x="29" y="423.5" width="2" height="1.3" fill="#cccccc"/>
<rect x="32" y="423.5" width="9" height="1.3" fill="#b5cea8"/>
<rect x="42" y="423.5" width="2" height="1.3" fill="#cccccc"/>
<rect x="12" y="425.5" width="11" height="1.3" fill="#cccccc"/>
<rect x="24" y="425.5" width="9" height="1.3" fill="#b5cea8"/>
<rect x="34" y="425.5" width="2" height="1.3" fill="#4ec9b0"/>
<rect x="37" y="425.5" width="7" height="1.3" fill="#cccccc"/>
<rect x="12" y="427.5" width="3" height="1.3" fill="#cccccc"/>
<rect x="16" y="427.5" width="5" height="1.3" fill="#b5cea8"/>
<rect x="22" y="427.5" width="4" height="1.3" fill="#4ec9b0"/>
<rect x="27" y="427.5" width="7" height="1.3" fill="#cccccc"/>
<rect x="35" y="427.5" width="5" height="1.3" fill="#b5cea8"/>
<rect x="41" y="427.5" width="3" height="1.3" fill="#cccccc"/>
<rect x="12" y="429.5" width="5" height="1.3" fill="#cccccc"/>
<rect x="18" y="429.5" width="11" height="1.3" fill="#b5cea8"/>
<rect x="30" y="429.5" width="9" height="1.3" fill="#4ec9b0"/>
<rect x="40" y="429.5" width="4" height="1.3" fill="#cccccc"/>
<rect x="12" y="431.5" width="10" height="1.3" fill="#cccccc"/>
<rect x="23" y="431.5" width="5" height="1.3" fill="#b5cea8"/>
<rect x="29" y="431.5" width="9" height="1.3" fill="#4ec9b0"/>
<rect x="39" y="431.5" width="4" height="1.3" fill="#cccccc"/>
<rect x="12" y="433.5" width="8" height="1.3" fill="#9cdcfe"/>
<rect x="21" y="433.5" width="4" height="1.3" fill="#cccccc"/>
<rect x="26" y="433.5" width="6" height="1.3" fill="#569cd6"/>
<rect x="33" y="433.5" width="10" height="1.3" fill="#cccccc"/>
<rect x="44" y="433.5" width="10" height="1.3" fill="#9cdcfe"/>
<rect x="55" y="433.5" width="9" height="1.3" fill="#cccccc"/>
<rect x="65" y="433.5" width="9" height="1.3" fill="#cccccc"/>
<rect x="75" y="433.5" width="7" height="1.3" fill="#9cdcfe"/>
<rect x="83" y="433.5" width="10" height="1.3" fill="#569cd6"/>
<rect x="12" y="435.5" width="5" height="1.3" fill="#4ec9b0"/>
<rect x="18" y="435.5" width="8" height="1.3" fill="#9cdcfe"/>
<rect x="27" y="435.5" width="2" height="1.3" fill="#cccccc"/>
<rect x="30" y="435.5" width="5" height="1.3" fill="#4ec9b0"/>
<rect x="36" y="435.5" width="4" height="1.3" fill="#9cdcfe"/>
<rect x="41" y="435.5" width="5" height="1.3" fill="#dcdcaa"/>
<rect x="12" y="437.5" width="10" height="1.3" fill="#569cd6"/>
<rect x="23" y="437.5" width="6" height="1.3" fill="#dcdcaa"/>
<rect x="30" y="437.5" width="2" height="1.3" fill="#9cdcfe"/>
<rect x="33" y="437.5" width="5" height="1.3" fill="#9cdcfe"/>
<rect x="39" y="437.5" width="2" height="1.3" fill="#cccccc"/>
<rect x="42" y="437.5" width="9" height="1.3" fill="#9cdcfe"/>
<rect x="52" y="437.5" width="9" height="1.3" fill="#9cdcfe"/>
<rect x="62" y="437.5" width="8" height="1.3" fill="#cccccc"/>
<rect x="71" y="437.5" width="4" height="1.3" fill="#9cdcfe"/>
<rect x="76" y="437.5" width="4" height="1.3" fill="#9cdcfe"/>
<rect x="81" y="437.5" width="3" height="1.3" fill="#9cdcfe"/>
<rect x="12" y="441.5" width="12" height="1.3" fill="#569cd6"/>
<rect x="24" y="441.5" width="2" height="1.3" fill="#9cdcfe"/>
<rect x="27" y="441.5" width="19" height="1.3" fill="#ce9178"/>
<rect x="47" y="441.5" width="8" height="1.3" fill="#cccccc"/>
<rect x="12" y="443.5" width="10" height="1.3" fill="#9cdcfe"/>
<rect x="23" y="443.5" width="10" height="1.3" fill="#cccccc"/>
<rect x="34" y="443.5" width="2" height="1.3" fill="#569cd6"/>
<rect x="37" y="443.5" width="4" height="1.3" fill="#cccccc"/>
<rect x="42" y="443.5" width="11" height="1.3" fill="#9cdcfe"/>
<rect x="54" y="443.5" width="1" height="1.3" fill="#569cd6"/>
<rect x="12" y="445.5" width="4" height="1.3" fill="#9cdcfe"/>
<rect x="17" y="445.5" width="4" height="1.3" fill="#cccccc"/>
<rect x="22" y="445.5" width="3" height="1.3" fill="#dcdcaa"/>
<rect x="26" y="445.5" width="7" height="1.3" fill="#9cdcfe"/>
<rect x="34" y="445.5" width="6" height="1.3" fill="#cccccc"/>
<rect x="41" y="445.5" width="11" height="1.3" fill="#cccccc"/>
<rect x="53" y="445.5" width="10" height="1.3" fill="#dcdcaa"/>
<rect x="64" y="445.5" width="9" height="1.3" fill="#cccccc"/>
<rect x="74" y="445.5" width="9" height="1.3" fill="#dcdcaa"/>
<rect x="84" y="445.5" width="11" height="1.3" fill="#cccccc"/>
<rect x="96" y="445.5" width="10" height="1.3" fill="#9cdcfe"/>
<rect x="107" y="445.5" width="2" height="1.3" fill="#dcdcaa"/>
<rect x="88" y="447.5" width="5" height="1.3" fill="#4ec9b0"/>
<rect x="94" y="447.5" width="3" height="1.3" fill="#9cdcfe"/>
<rect x="98" y="447.5" width="9" height="1.3" fill="#cccccc"/>
<rect x="108" y="447.5" width="5" height="1.3" fill="#4ec9b0"/>
<rect x="114" y="447.5" width="2" height="1.3" fill="#9cdcfe"/>
<rect x="117" y="447.5" width="2" height="1.3" fill="#dcdcaa"/>
<rect x="88" y="449.5" width="10" height="1.3" fill="#4ec9b0"/>
<rect x="12" y="451.5" width="9" height="1.3" fill="#569cd6"/>
<rect x="22" y="451.5" width="4" height="1.3" fill="#569cd6"/>
<rect x="27" y="451.5" width="6" height="1.3" fill="#dcdcaa"/>
<rect x="34" y="451.5" width="7" height="1.3" fill="#4ec9b0"/>
<rect x="42" y="451.5" width="6" height="1.3" fill="#9cdcfe"/>
<rect x="49" y="451.5" width="3" height="1.3" fill="#cccccc"/>
<rect x="16" y="453.5" width="10" height="1.3" fill="#4ec9b0"/>
<rect x="27" y="453.5" width="6" height="1.3" fill="#9cdcfe"/>
<rect x="34" y="453.5" width="9" height="1.3" fill="#cccccc"/>
<rect x="16" y="455.5" width="7" height="1.3" fill="#4ec9b0"/>
<rect x="24" y="455.5" width="3" height="1.3" fill="#9cdcfe"/>
<rect x="28" y="455.5" width="4" height="1.3" fill="#cccccc"/>
<rect x="33" y="455.5" width="3" height="1.3" fill="#569cd6"/>
<rect x="37" y="455.5" width="8" height="1.3" fill="#9cdcfe"/>
<rect x="46" y="455.5" width="9" height="1.3" fill="#9cdcfe"/>
<rect x="56" y="455.5" width="3" height="1.3" fill="#9cdcfe"/>
<rect x="60" y="455.5" width="9" height="1.3" fill="#cccccc"/>
<rect x="70" y="455.5" width="8" height="1.3" fill="#9cdcfe"/>
<rect x="79" y="455.5" width="4" height="1.3" fill="#cccccc"/>
<rect x="16" y="457.5" width="6" height="1.3" fill="#9cdcfe"/>
<rect x="20" y="459.5" width="9" height="1.3" fill="#4ec9b0"/>
<rect x="30" y="459.5" width="2" height="1.3" fill="#9cdcfe"/>
<rect x="33" y="459.5" width="5" height="1.3" fill="#cccccc"/>
<rect x="39" y="459.5" width="5" height="1.3" fill="#569cd6"/>
<rect x="16" y="461.5" width="1" height="1.3" fill="#cccccc"/>
<rect x="12" y="463.5" width="2" height="1.3" fill="#cccccc"/>
<rect x="12" y="465.5" width="4" height="1.3" fill="#6a9955"/>
<rect x="17" y="465.5" width="6" height="1.3" fill="#6a9955"/>
<rect x="24" y="465.5" width="10" height="1.3" fill="#6a9955"/>
<rect x="35" y="465.5" width="7" height="1.3" fill="#6a9955"/>
<rect x="43" y="465.5" width="1" height="1.3" fill="#6a9955"/>
<rect x="12" y="467.5" width="5" height="1.3" fill="#dcdcaa"/>
<rect x="18" y="467.5" width="5" height="1.3" fill="#9cdcfe"/>
<rect x="24" y="467.5" width="8" height="1.3" fill="#cccccc"/>
<rect x="33" y="467.5" width="3" height="1.3" fill="#9cdcfe"/>
<rect x="37" y="467.5" width="7" height="1.3" fill="#569cd6"/>
<rect x="45" y="467.5" width="6" height="1.3" fill="#9cdcfe"/>
<rect x="52" y="467.5" width="11" height="1.3" fill="#9cdcfe"/>
<rect x="64" y="467.5" width="7" height="1.3" fill="#9cdcfe"/>
<rect x="72" y="467.5" width="8" height="1.3" fill="#cccccc"/>
<rect x="81" y="467.5" width="3" height="1.3" fill="#cccccc"/>
<rect x="85" y="467.5" width="11" height="1.3" fill="#cccccc"/>
<rect x="97" y="467.5" width="4" height="1.3" fill="#569cd6"/>
<rect x="102" y="467.5" width="4" height="1.3" fill="#cccccc"/>
<rect x="107" y="467.5" width="5" height="1.3" fill="#9cdcfe"/>
<rect x="113" y="467.5" width="1" height="1.3" fill="#9cdcfe"/>
<rect x="12" y="471.5" width="3" height="1.3" fill="#4ec9b0"/>
<rect x="16" y="471.5" width="5" height="1.3" fill="#9cdcfe"/>
<rect x="22" y="471.5" width="2" height="1.3" fill="#cccccc"/>
<rect x="25" y="471.5" width="4" height="1.3" fill="#569cd6"/>
<rect x="30" y="471.5" width="3" height="1.3" fill="#9cdcfe"/>
<rect x="34" y="471.5" width="8" height="1.3" fill="#569cd6"/>
<rect x="43" y="471.5" width="3" height="1.3" fill="#569cd6"/>
<rect x="47" y="471.5" width="7" height="1.3" fill="#9cdcfe"/>
<rect x="12" y="473.5" width="4" height="1.3" fill="#569cd6"/>
<rect x="17" y="473.5" width="5" height="1.3" fill="#569cd6"/>
<rect x="23" y="473.5" width="4" height="1.3" fill="#dcdcaa"/>
<rect x="28" y="473.5" width="8" height="1.3" fill="#4ec9b0"/>
<rect x="37" y="473.5" width="9" height="1.3" fill="#9cdcfe"/>
<rect x="47" y="473.5" width="7" height="1.3" fill="#cccccc"/>
<rect x="55" y="473.5" width="6" height="1.3" fill="#4ec9b0"/>
<rect x="16" y="475.5" width="8" height="1.3" fill="#4ec9b0"/>
<rect x="25" y="475.5" width="11" height="1.3" fill="#9cdcfe"/>
<rect x="37" y="475.5" width="7" height="1.3" fill="#cccccc"/>
<rect x="45" y="475.5" width="5" height="1.3" fill="#569cd6"/>
<rect x="51" y="475.5" width="4" height="1.3" fill="#9cdcfe"/>
<rect x="16" y="477.5" width="6" height="1.3" fill="#4ec9b0"/>
<rect x="23" y="477.5" width="7" height="1.3" fill="#9cdcfe"/>
<rect x="31" y="477.5" width="5" height="1.3" fill="#cccccc"/>
<rect x="37" y="477.5" width="7" height="1.3" fill="#569cd6"/>
<rect x="45" y="477.5" width="6" height="1.3" fill="#9cdcfe"/>
<rect x="52" y="477.5" width="6" height="1.3" fill="#cccccc"/>
<rect x="16" y="479.5" width="5" height="1.3" fill="#4ec9b0"/>
<rect x="22" y="479.5" width="10" height="1.3" fill="#9cdcfe"/>
<rect x="33" y="479.5" width="7" height="1.3" fill="#cccccc"/>
<rect x="41" y="479.5" width="6" height="1.3" fill="#4ec9b0"/>
<rect x="48" y="479.5" width="3" height="1.3" fill="#9cdcfe"/>
<rect x="16" y="481.5" width="6" height="1.3" fill="#9cdcfe"/>
<rect x="23" y="481.5" width="10" height="1.3" fill="#cccccc"/>
<rect x="34" y="481.5" width="6" height="1.3" fill="#dcdcaa"/>
<rect x="41" y="481.5" width="6" height="1.3" fill="#9cdcfe"/>
<rect x="12" y="483.5" width="2" height="1.3" fill="#cccccc"/>
<rect x="12" y="485.5" width="12" height="1.3" fill="#569cd6"/>
<rect x="24" y="485.5" width="2" height="1.3" fill="#9cdcfe"/>
<rect x="27" y="485.5" width="19" height="1.3" fill="#ce9178"/>
<rect x="47" y="485.5" width="8" height="1.3" fill="#cccccc"/>
<rect x="12" y="487.5" width="11" height="1.3" fill="#dcdcaa"/>
<rect x="24" y="487.5" width="10" height="1.3" fill="#9cdcfe"/>
<rect x="35" y="487.5" width="10" height="1.3" fill="#cccccc"/>
<rect x="46" y="487.5" width="4" height="1.3" fill="#9cdcfe"/>
<rect x="51" y="487.5" width="11" height="1.3" fill="#569cd6"/>
<rect x="63" y="487.5" width="5" height="1.3" fill="#569cd6"/>
<rect x="69" y="487.5" width="5" height="1.3" fill="#569cd6"/>
<rect x="75" y="487.5" width="2" height="1.3" fill="#569cd6"/>
<rect x="78" y="487.5" width="5" height="1.3" fill="#cccccc"/>
<rect x="84" y="487.5" width="4" height="1.3" fill="#cccccc"/>
<rect x="89" y="487.5" width="6" height="1.3" fill="#569cd6"/>
<rect x="12" y="489.5" width="7" height="1.3" fill="#dcdcaa"/>
<rect x="20" y="489.5" width="7" height="1.3" fill="#9cdcfe"/>
<rect x="28" y="489.5" width="3" height="1.3" fill="#cccccc"/>
<rect x="32" y="489.5" width="7" height="1.3" fill="#9cdcfe"/>
<rect x="40" y="489.5" width="6" height="1.3" fill="#569cd6"/>
<rect x="47" y="489.5" width="9" height="1.3" fill="#cccccc"/>
<rect x="57" y="489.5" width="6" height="1.3" fill="#569cd6"/>
<rect x="12" y="491.5" width="5" height="1.3" fill="#569cd6"/>
<rect x="18" y="491.5" width="11" height="1.3" fill="#dcdcaa"/>
<rect x="30" y="491.5" width="10" height="1.3" fill="#9cdcfe"/>
<rect x="41" y="491.5" width="10" height="1.3" fill="#cccccc"/>
<rect x="52" y="491.5" width="8" height="1.3" fill="#9cdcfe"/>
<rect x="12" y="493.5" width="3" height="1.3" fill="#6a9955"/>
<rect x="16" y="493.5" width="10" height="1.3" fill="#6a9955"/>
<rect x="27" y="493.5" width="4" height="1.3" fill="#6a9955"/>
<rect x="32" y="493.5" width="11" height="1.3" fill="#6a9955"/>
<rect x="44" y="493.5" width="3" height="1.3" fill="#6a9955"/>
<rect x="48" y="493.5" width="6" height="1.3" fill="#6a9955"/>
<rect x="55" y="493.5" width="5" height="1.3" fill="#6a9955"/>
<rect x="61" y="493.5" width="4" height="1.3" fill="#6a9955"/>
<rect x="66" y="493.5" width="11" height="1.3" fill="#6a9955"/>
<rect x="78" y="493.5" width="9" height="1.3" fill="#6a9955"/>
<rect x="88" y="493.5" width="8" height="1.3" fill="#6a9955"/>
<rect x="97" y="493.5" width="4" height="1.3" fill="#6a9955"/>
<rect x="102" y="493.5" width="3" height="1.3" fill="#6a9955"/>
<rect x="12" y="495.5" width="5" height="1.3" fill="#569cd6"/>
<rect x="18" y="495.5" width="8" height="1.3" fill="#dcdcaa"/>
<rect x="27" y="495.5" width="9" height="1.3" fill="#9cdcfe"/>
<rect x="37" y="495.5" width="2" height="1.3" fill="#cccccc"/>
<rect x="40" y="495.5" width="4" height="1.3" fill="#9cdcfe"/>
<rect x="45" y="495.5" width="10" height="1.3" fill="#569cd6"/>
<rect x="56" y="495.5" width="8" height="1.3" fill="#cccccc"/>
<rect x="65" y="495.5" width="10" height="1.3" fill="#9cdcfe"/>
<rect x="8" y="499.5" width="6" height="1.3" fill="#c586c0"/>
<rect x="15" y="499.5" width="14" height="1.3" fill="#569cd6"/>
<rect x="12" y="503.5" width="7" height="1.3" fill="#569cd6"/>
<rect x="20" y="503.5" width="10" height="1.3" fill="#dcdcaa"/>
<rect x="31" y="503.5" width="4" height="1.3" fill="#9cdcfe"/>
<rect x="36" y="503.5" width="4" height="1.3" fill="#cccccc"/>
<rect x="12" y="507.5" width="11" height="1.3" fill="#569cd6"/>
<rect x="24" y="507.5" width="3" height="1.3" fill="#dcdcaa"/>
<rect x="8" y="511.5" width="3" height="1.3" fill="#c586c0"/>
<rect x="8" y="591.5" width="6" height="1.3" fill="#c586c0"/>
<rect x="15" y="591.5" width="14" height="1.3" fill="#569cd6"/>
<rect x="12" y="593.5" width="2" height="1.3" fill="#569cd6"/>
<rect x="15" y="593.5" width="2" height="1.3" fill="#4ec9b0"/>
<rect x="18" y="593.5" width="4" height="1.3" fill="#9cdcfe"/>
<rect x="23" y="593.5" width="8" height="1.3" fill="#4ec9b0"/>
<rect x="32" y="593.5" width="7" height="1.3" fill="#569cd6"/>
<rect x="40" y="593.5" width="9" height="1.3" fill="#6a9955"/>
<rect x="50" y="593.5" width="7" height="1.3" fill="#6a9955"/>
<rect x="58" y="593.5" width="8" height="1.3" fill="#6a9955"/>
<rect x="67" y="593.5" width="7" height="1.3" fill="#6a9955"/>
<rect x="12" y="595.5" width="9" height="1.3" fill="#dcdcaa"/>
<rect x="22" y="595.5" width="9" height="1.3" fill="#9cdcfe"/>
<rect x="32" y="595.5" width="8" height="1.3" fill="#cccccc"/>
<rect x="12" y="597.5" width="3" height="1.3" fill="#4ec9b0"/>
<rect x="16" y="597.5" width="11" height="1.3" fill="#9cdcfe"/>
<rect x="28" y="597.5" width="3" height="1.3" fill="#cccccc"/>
<rect x="32" y="597.5" width="10" height="1.3" fill="#4ec9b0"/>
<rect x="43" y="597.5" width="7" height="1.3" fill="#9cdcfe"/>
<rect x="12" y="599.5" width="8" height="1.3" fill="#4ec9b0"/>
<rect x="21" y="599.5" width="2" height="1.3" fill="#9cdcfe"/>
<rect x="24" y="599.5" width="7" height="1.3" fill="#cccccc"/>
<rect x="32" y="599.5" width="1" height="1.3" fill="#4ec9b0"/>
<rect x="12" y="601.5" width="11" height="1.3" fill="#9cdcfe"/>
<rect x="24" y="601.5" width="8" height="1.3" fill="#cccccc"/>
<rect x="33" y="601.5" width="8" height="1.3" fill="#569cd6"/>
<rect x="42" y="601.5" width="11" height="1.3" fill="#cccccc"/>
<rect x="12" y="603.5" width="6" height="1.3" fill="#9cdcfe"/>
<rect x="19" y="603.5" width="11" height="1.3" fill="#cccccc"/>
<rect x="31" y="603.5" width="3" height="1.3" fill="#569cd6"/>
<rect x="35" y="603.5" width="5" height="1.3" fill="#cccccc"/>
<rect x="12" y="605.5" width="9" height="1.3" fill="#569cd6"/>
<rect x="22" y="605.5" width="5" height="1.3" fill="#dcdcaa"/>
<rect x="28" y="605.5" width="10" height="1.3" fill="#9cdcfe"/>
<rect x="39" y="605.5" width="7" height="1.3" fill="#cccccc"/>
<rect x="8" y="607.5" width="3" height="1.3" fill="#c586c0"/>
<rect x="12" y="611.5" width="9" height="1.3" fill="#4ec9b0"/>
<rect x="22" y="611.5" width="3" height="1.3" fill="#9cdcfe"/>
<rect x="26" y="611.5" width="10" height="1.3" fill="#cccccc"/>
<rect x="37" y="611.5" width="5" height="1.3" fill="#569cd6"/>
<rect x="43" y="611.5" width="4" height="1.3" fill="#9cdcfe"/>
<rect x="12" y="613.5" width="8" height="1.3" fill="#dcdcaa"/>
<rect x="21" y="613.5" width="5" height="1.3" fill="#9cdcfe"/>
<rect x="12" y="615.5" width="7" height="1.3" fill="#569cd6"/>
<rect x="20" y="615.5" width="10" height="1.3" fill="#dcdcaa"/>
<rect x="31" y="615.5" width="8" height="1.3" fill="#9cdcfe"/>
<rect x="40" y="615.5" width="11" height="1.3" fill="#cccccc"/>
<rect x="52" y="615.5" width="4" height="1.3" fill="#9cdcfe"/>
<rect x="57" y="615.5" width="5" height="1.3" fill="#569cd6"/>
<rect x="63" y="615.5" width="8" height="1.3" fill="#569cd6"/>
<rect x="72" y="615.5" width="3" height="1.3" fill="#cccccc"/>
<rect x="76" y="615.5" width="3" height="1.3" fill="#569cd6"/>
<rect x="80" y="615.5" width="4" height="1.3" fill="#cccccc"/>
<rect x="85" y="615.5" width="10" height="1.3" fill="#569cd6"/>
<rect x="96" y="615.5" width="9" height="1.3" fill="#cccccc"/>
<rect x="106" y="615.5" width="6" height="1.3" fill="#cccccc"/>
<rect x="113" y="615.5" width="6" height="1.3" fill="#cccccc"/>
<rect x="12" y="619.5" width="12" height="1.3" fill="#dcdcaa"/>
<rect x="24" y="619.5" width="2" height="1.3" fill="#9cdcfe"/>
<rect x="27" y="619.5" width="14" height="1.3" fill="#ce9178"/>
<rect x="42" y="619.5" width="6" height="1.3" fill="#cccccc"/>
<rect x="12" y="621.5" width="4" height="1.3" fill="#6a9955"/>
<rect x="17" y="621.5" width="3" height="1.3" fill="#6a9955"/>
<rect x="21" y="621.5" width="9" height="1.3" fill="#6a9955"/>
<rect x="31" y="621.5" width="4" height="1.3" fill="#6a9955"/>
<rect x="36" y="621.5" width="11" height="1.3" fill="#6a9955"/>
<rect x="48" y="621.5" width="2" height="1.3" fill="#6a9955"/>
<rect x="51" y="621.5" width="2" height="1.3" fill="#6a9955"/>
<rect x="54" y="621.5" width="7" height="1.3" fill="#6a9955"/>
<rect x="62" y="621.5" width="7" height="1.3" fill="#6a9955"/>
<rect x="12" y="623.5" width="5" height="1.3" fill="#c586c0"/>
<rect x="18" y="623.5" width="4" height="1.3" fill="#9cdcfe"/>
<rect x="23" y="623.5" width="9" height="1.3" fill="#cccccc"/>
<rect x="33" y="623.5" width="1" height="1.3" fill="#569cd6"/>
<rect x="12" y="625.5" width="1" height="1.3" fill="#cccccc"/>
<rect x="16" y="629.5" width="5" height="1.3" fill="#6a9955"/>
<rect x="22" y="629.5" width="6" height="1.3" fill="#6a9955"/>
<rect x="29" y="629.5" width="5" height="1.3" fill="#6a9955"/>
<rect x="35" y="629.5" width="7" height="1.3" fill="#6a9955"/>
<rect x="43" y="629.5" width="2" height="1.3" fill="#6a9955"/>
<rect x="46" y="629.5" width="10" height="1.3" fill="#6a9955"/>
<rect x="57" y="629.5" width="9" height="1.3" fill="#6a9955"/>
<rect x="16" y="631.5" width="5" height="1.3" fill="#dcdcaa"/>
<rect x="22" y="631.5" width="2" height="1.3" fill="#9cdcfe"/>
<rect x="25" y="631.5" width="3" height="1.3" fill="#cccccc"/>
<rect x="29" y="631.5" width="6" height="1.3" fill="#cccccc"/>
<rect x="36" y="631.5" width="7" height="1.3" fill="#9cdcfe"/>
<rect x="44" y="631.5" width="2" height="1.3" fill="#cccccc"/>
<rect x="47" y="631.5" width="4" height="1.3" fill="#6a9955"/>
<rect x="52" y="631.5" width="7" height="1.3" fill="#6a9955"/>
<rect x="60" y="631.5" width="9" height="1.3" fill="#6a9955"/>
<rect x="70" y="631.5" width="8" height="1.3" fill="#6a9955"/>
<rect x="79" y="631.5" width="3" height="1.3" fill="#6a9955"/>
<rect x="16" y="633.5" width="4" height="1.3" fill="#6a9955"/>
<rect x="21" y="633.5" width="5" height="1.3" fill="#6a9955"/>
<rect x="27" y="633.5" width="3" height="1.3" fill="#6a9955"/>
<rect x="31" y="633.5" width="6" height="1.3" fill="#6a9955"/>
<rect x="38" y="633.5" width="5" height="1.3" fill="#6a9955"/>
<rect x="44" y="633.5" width="6" height="1.3" fill="#6a9955"/>
<rect x="51" y="633.5" width="10" height="1.3" fill="#6a9955"/>
<rect x="62" y="633.5" width="10" height="1.3" fill="#6a9955"/>
<rect x="16" y="635.5" width="6" height="1.3" fill="#6a9955"/>
<rect x="23" y="635.5" width="4" height="1.3" fill="#6a9955"/>
<rect x="28" y="635.5" width="6" height="1.3" fill="#6a9955"/>
<rect x="35" y="635.5" width="3" height="1.3" fill="#6a9955"/>
<rect x="39" y="635.5" width="3" height="1.3" fill="#6a9955"/>
<rect x="43" y="635.5" width="10" height="1.3" fill="#6a9955"/>
<rect x="54" y="635.5" width="10" height="1.3" fill="#6a9955"/>
<rect x="65" y="635.5" width="2" height="1.3" fill="#6a9955"/>
<rect x="68" y="635.5" width="10" height="1.3" fill="#6a9955"/>
<rect x="79" y="635.5" width="8" height="1.3" fill="#6a9955"/>
<rect x="88" y="635.5" width="4" height="1.3" fill="#6a9955"/>
<rect x="93" y="635.5" width="5" height="1.3" fill="#6a9955"/>
<rect x="99" y="635.5" width="4" height="1.3" fill="#6a9955"/>
<rect x="104" y="635.5" width="10" height="1.3" fill="#6a9955"/>
<rect x="115" y="635.5" width="4" height="1.3" fill="#6a9955"/>
<rect x="16" y="639.5" width="2" height="1.3" fill="#6a9955"/>
<rect x="19" y="639.5" width="11" height="1.3" fill="#6a9955"/>
<rect x="31" y="639.5" width="5" height="1.3" fill="#6a9955"/>
<rect x="16" y="641.5" width="9" height="1.3" fill="#569cd6"/>
<rect x="26" y="641.5" width="2" height="1.3" fill="#dcdcaa"/>
<rect x="29" y="641.5" width="4" height="1.3" fill="#9cdcfe"/>
<rect x="34" y="641.5" width="3" height="1.3" fill="#cccccc"/>
<rect x="12" y="643.5" width="1" height="1.3" fill="#cccccc"/>
<rect x="8" y="645.5" width="1" height="1.3" fill="#cccccc"/>
<rect x="8" y="515.5" width="3" height="1.3" fill="#c586c0"/>
<rect x="12" y="515.5" width="24" height="1.3" fill="#569cd6"/>
<rect x="37" y="515.5" width="1" height="1.3" fill="#cccccc"/>
<rect x="38" y="515.5" width="1" height="1.3" fill="#cccccc"/>
<rect x="40" y="515.5" width="1" height="1.3" fill="#b5cea8"/>
<rect x="12" y="519.5" width="14" height="1.3" fill="#dcdcaa"/>
<rect x="26" y="519.5" width="1" height="1.3" fill="#cccccc"/>
<rect x="27" y="519.5" width="24" height="1.3" fill="#569cd6"/>
<rect x="51" y="519.5" width="1" height="1.3" fill="#cccccc"/>
<rect x="53" y="519.5" width="29" height="1.3" fill="#569cd6"/>
<rect x="82" y="519.5" width="1" height="1.3" fill="#cccccc"/>
<rect x="83" y="519.5" width="1" height="1.3" fill="#cccccc"/>
<rect x="8" y="521.5" width="6" height="1.3" fill="#c586c0"/>
<rect x="12" y="525.5" width="8" height="1.3" fill="#569cd6"/>
<rect x="20" y="525.5" width="1" height="1.3" fill="#cccccc"/>
<rect x="21" y="525.5" width="3" height="1.3" fill="#569cd6"/>
<rect x="24" y="525.5" width="1" height="1.3" fill="#cccccc"/>
<rect x="26" y="525.5" width="25" height="1.3" fill="#ce9178"/>
<rect x="51" y="525.5" width="1" height="1.3" fill="#cccccc"/>
<rect x="52" y="525.5" width="1" height="1.3" fill="#cccccc"/>
<rect x="12" y="527.5" width="7" height="1.3" fill="#dcdcaa"/>
<rect x="19" y="527.5" width="1" height="1.3" fill="#cccccc"/>
<rect x="20" y="527.5" width="1" height="1.3" fill="#cccccc"/>
<rect x="21" y="527.5" width="1" height="1.3" fill="#cccccc"/>
<rect x="12" y="529.5" width="34" height="1.3" fill="#6a9955"/>
<rect x="12" y="531.5" width="93" height="1.3" fill="#6a9955"/>
<rect x="12" y="533.5" width="10" height="1.3" fill="#4ec9b0"/>
<rect x="23" y="533.5" width="1" height="1.3" fill="#cccccc"/>
<rect x="24" y="533.5" width="4" height="1.3" fill="#9cdcfe"/>
<rect x="29" y="533.5" width="1" height="1.3" fill="#cccccc"/>
<rect x="31" y="533.5" width="11" height="1.3" fill="#569cd6"/>
<rect x="42" y="533.5" width="1" height="1.3" fill="#cccccc"/>
<rect x="43" y="533.5" width="10" height="1.3" fill="#4ec9b0"/>
<rect x="54" y="533.5" width="1" height="1.3" fill="#cccccc"/>
<rect x="55" y="533.5" width="1" height="1.3" fill="#cccccc"/>
<rect x="56" y="533.5" width="1" height="1.3" fill="#cccccc"/>
<rect x="57" y="533.5" width="16" height="1.3" fill="#dcdcaa"/>
<rect x="73" y="533.5" width="1" height="1.3" fill="#cccccc"/>
<rect x="74" y="533.5" width="17" height="1.3" fill="#569cd6"/>
<rect x="92" y="533.5" width="1" height="1.3" fill="#cccccc"/>
<rect x="94" y="533.5" width="23" height="1.3" fill="#569cd6"/>
<rect x="118" y="533.5" width="1" height="1.3" fill="#cccccc"/>
<rect x="12" y="535.5" width="6" height="1.3" fill="#dcdcaa"/>
<rect x="18" y="535.5" width="1" height="1.3" fill="#cccccc"/>
<rect x="19" y="535.5" width="4" height="1.3" fill="#9cdcfe"/>
<rect x="23" y="535.5" width="1" height="1.3" fill="#cccccc"/>
<rect x="24" y="535.5" width="1" height="1.3" fill="#cccccc"/>
<rect x="12" y="537.5" width="10" height="1.3" fill="#4ec9b0"/>
<rect x="23" y="537.5" width="1" height="1.3" fill="#cccccc"/>
<rect x="24" y="537.5" width="4" height="1.3" fill="#9cdcfe"/>
<rect x="29" y="537.5" width="1" height="1.3" fill="#cccccc"/>
<rect x="31" y="537.5" width="11" height="1.3" fill="#569cd6"/>
<rect x="42" y="537.5" width="1" height="1.3" fill="#cccccc"/>
<rect x="43" y="537.5" width="10" height="1.3" fill="#4ec9b0"/>
<rect x="54" y="537.5" width="1" height="1.3" fill="#cccccc"/>
<rect x="55" y="537.5" width="1" height="1.3" fill="#cccccc"/>
<rect x="56" y="537.5" width="1" height="1.3" fill="#cccccc"/>
<rect x="57" y="537.5" width="16" height="1.3" fill="#dcdcaa"/>
<rect x="73" y="537.5" width="1" height="1.3" fill="#cccccc"/>
<rect x="74" y="537.5" width="17" height="1.3" fill="#569cd6"/>
<rect x="92" y="537.5" width="1" height="1.3" fill="#cccccc"/>
<rect x="94" y="537.5" width="23" height="1.3" fill="#569cd6"/>
<rect x="118" y="537.5" width="1" height="1.3" fill="#cccccc"/>
<rect x="12" y="539.5" width="6" height="1.3" fill="#dcdcaa"/>
<rect x="18" y="539.5" width="1" height="1.3" fill="#cccccc"/>
<rect x="19" y="539.5" width="4" height="1.3" fill="#9cdcfe"/>
<rect x="23" y="539.5" width="1" height="1.3" fill="#cccccc"/>
<rect x="24" y="539.5" width="1" height="1.3" fill="#cccccc"/>
<rect x="12" y="541.5" width="31" height="1.3" fill="#6a9955"/>
<rect x="12" y="543.5" width="21" height="1.3" fill="#dcdcaa"/>
<rect x="33" y="543.5" width="1" height="1.3" fill="#cccccc"/>
<rect x="34" y="543.5" width="1" height="1.3" fill="#cccccc"/>
<rect x="35" y="543.5" width="8" height="1.3" fill="#9cdcfe"/>
<rect x="43" y="543.5" width="1" height="1.3" fill="#cccccc"/>
<rect x="45" y="543.5" width="4" height="1.3" fill="#9cdcfe"/>
<rect x="49" y="543.5" width="1" height="1.3" fill="#cccccc"/>
<rect x="51" y="543.5" width="4" height="1.3" fill="#9cdcfe"/>
<rect x="55" y="543.5" width="1" height="1.3" fill="#cccccc"/>
<rect x="57" y="543.5" width="17" height="1.3" fill="#569cd6"/>
<rect x="75" y="543.5" width="1" height="1.3" fill="#cccccc"/>
<rect x="77" y="543.5" width="23" height="1.3" fill="#569cd6"/>
<rect x="100" y="543.5" width="1" height="1.3" fill="#cccccc"/>
<rect x="101" y="543.5" width="1" height="1.3" fill="#cccccc"/>
<rect x="12" y="547.5" width="8" height="1.3" fill="#569cd6"/>
<rect x="20" y="547.5" width="1" height="1.3" fill="#cccccc"/>
<rect x="21" y="547.5" width="3" height="1.3" fill="#569cd6"/>
<rect x="24" y="547.5" width="1" height="1.3" fill="#cccccc"/>
<rect x="26" y="547.5" width="33" height="1.3" fill="#ce9178"/>
<rect x="59" y="547.5" width="1" height="1.3" fill="#cccccc"/>
<rect x="60" y="547.5" width="1" height="1.3" fill="#cccccc"/>
<rect x="12" y="549.5" width="16" height="1.3" fill="#dcdcaa"/>
<rect x="28" y="549.5" width="1" height="1.3" fill="#cccccc"/>
<rect x="29" y="549.5" width="1" height="1.3" fill="#cccccc"/>
<rect x="30" y="549.5" width="8" height="1.3" fill="#9cdcfe"/>
<rect x="38" y="549.5" width="1" height="1.3" fill="#cccccc"/>
<rect x="39" y="549.5" width="1" height="1.3" fill="#cccccc"/>
<rect x="12" y="551.5" width="8" height="1.3" fill="#9cdcfe"/>
<rect x="20" y="551.5" width="1" height="1.3" fill="#cccccc"/>
<rect x="21" y="551.5" width="7" height="1.3" fill="#9cdcfe"/>
<rect x="29" y="551.5" width="1" height="1.3" fill="#cccccc"/>
<rect x="31" y="551.5" width="17" height="1.3" fill="#569cd6"/>
<rect x="48" y="551.5" width="1" height="1.3" fill="#cccccc"/>
<rect x="12" y="553.5" width="8" height="1.3" fill="#9cdcfe"/>
<rect x="20" y="553.5" width="1" height="1.3" fill="#cccccc"/>
<rect x="21" y="553.5" width="7" height="1.3" fill="#9cdcfe"/>
<rect x="29" y="553.5" width="1" height="1.3" fill="#cccccc"/>
<rect x="31" y="553.5" width="17" height="1.3" fill="#569cd6"/>
<rect x="48" y="553.5" width="1" height="1.3" fill="#cccccc"/>
<rect x="12" y="555.5" width="8" height="1.3" fill="#9cdcfe"/>
<rect x="20" y="555.5" width="1" height="1.3" fill="#cccccc"/>
<rect x="21" y="555.5" width="8" height="1.3" fill="#9cdcfe"/>
<rect x="30" y="555.5" width="1" height="1.3" fill="#cccccc"/>
<rect x="32" y="555.5" width="21" height="1.3" fill="#9cdcfe"/>
<rect x="53" y="555.5" width="1" height="1.3" fill="#cccccc"/>
<rect x="12" y="557.5" width="8" height="1.3" fill="#9cdcfe"/>
<rect x="20" y="557.5" width="1" height="1.3" fill="#cccccc"/>
<rect x="21" y="557.5" width="10" height="1.3" fill="#9cdcfe"/>
<rect x="32" y="557.5" width="1" height="1.3" fill="#cccccc"/>
<rect x="34" y="557.5" width="23" height="1.3" fill="#9cdcfe"/>
<rect x="57" y="557.5" width="1" height="1.3" fill="#cccccc"/>
<rect x="12" y="559.5" width="8" height="1.3" fill="#9cdcfe"/>
<rect x="20" y="559.5" width="1" height="1.3" fill="#cccccc"/>
<rect x="21" y="559.5" width="13" height="1.3" fill="#9cdcfe"/>
<rect x="35" y="559.5" width="1" height="1.3" fill="#cccccc"/>
<rect x="37" y="559.5" width="22" height="1.3" fill="#9cdcfe"/>
<rect x="59" y="559.5" width="1" height="1.3" fill="#cccccc"/>
<rect x="12" y="561.5" width="8" height="1.3" fill="#9cdcfe"/>
<rect x="20" y="561.5" width="1" height="1.3" fill="#cccccc"/>
<rect x="21" y="561.5" width="8" height="1.3" fill="#9cdcfe"/>
<rect x="30" y="561.5" width="1" height="1.3" fill="#cccccc"/>
<rect x="32" y="561.5" width="1" height="1.3" fill="#cccccc"/>
<rect x="33" y="561.5" width="8" height="1.3" fill="#9cdcfe"/>
<rect x="41" y="561.5" width="1" height="1.3" fill="#cccccc"/>
<rect x="12" y="563.5" width="8" height="1.3" fill="#9cdcfe"/>
<rect x="20" y="563.5" width="1" height="1.3" fill="#cccccc"/>
<rect x="21" y="563.5" width="9" height="1.3" fill="#9cdcfe"/>
<rect x="31" y="563.5" width="1" height="1.3" fill="#cccccc"/>
<rect x="33" y="563.5" width="12" height="1.3" fill="#9cdcfe"/>
<rect x="45" y="563.5" width="1" height="1.3" fill="#cccccc"/>
<rect x="12" y="565.5" width="8" height="1.3" fill="#9cdcfe"/>
<rect x="20" y="565.5" width="1" height="1.3" fill="#cccccc"/>
<rect x="21" y="565.5" width="9" height="1.3" fill="#9cdcfe"/>
<rect x="31" y="565.5" width="1" height="1.3" fill="#cccccc"/>
<rect x="33" y="565.5" width="4" height="1.3" fill="#569cd6"/>
<rect x="37" y="565.5" width="1" height="1.3" fill="#cccccc"/>
<rect x="12" y="567.5" width="8" height="1.3" fill="#9cdcfe"/>
<rect x="20" y="567.5" width="1" height="1.3" fill="#cccccc"/>
<rect x="21" y="567.5" width="7" height="1.3" fill="#9cdcfe"/>
<rect x="29" y="567.5" width="1" height="1.3" fill="#cccccc"/>
<rect x="31" y="567.5" width="15" height="1.3" fill="#569cd6"/>
<rect x="46" y="567.5" width="1" height="1.3" fill="#cccccc"/>
<rect x="12" y="569.5" width="9" height="1.3" fill="#4ec9b0"/>
<rect x="22" y="569.5" width="1" height="1.3" fill="#cccccc"/>
<rect x="23" y="569.5" width="4" height="1.3" fill="#9cdcfe"/>
<rect x="28" y="569.5" width="1" height="1.3" fill="#cccccc"/>
<rect x="30" y="569.5" width="20" height="1.3" fill="#dcdcaa"/>
<rect x="50" y="569.5" width="1" height="1.3" fill="#cccccc"/>
<rect x="51" y="569.5" width="1" height="1.3" fill="#cccccc"/>
<rect x="52" y="569.5" width="8" height="1.3" fill="#9cdcfe"/>
<rect x="60" y="569.5" width="1" height="1.3" fill="#cccccc"/>
<rect x="61" y="569.5" width="1" height="1.3" fill="#cccccc"/>
<rect x="12" y="573.5" width="8" height="1.3" fill="#569cd6"/>
<rect x="20" y="573.5" width="1" height="1.3" fill="#cccccc"/>
<rect x="21" y="573.5" width="3" height="1.3" fill="#569cd6"/>
<rect x="24" y="573.5" width="1" height="1.3" fill="#cccccc"/>
<rect x="26" y="573.5" width="25" height="1.3" fill="#ce9178"/>
<rect x="51" y="573.5" width="1" height="1.3" fill="#cccccc"/>
<rect x="52" y="573.5" width="1" height="1.3" fill="#cccccc"/>
<rect x="12" y="575.5" width="75" height="1.3" fill="#6a9955"/>
<rect x="12" y="577.5" width="5" height="1.3" fill="#569cd6"/>
<rect x="18" y="577.5" width="23" height="1.3" fill="#4ec9b0"/>
<rect x="42" y="577.5" width="20" height="1.3" fill="#9cdcfe"/>
<rect x="63" y="577.5" width="1" height="1.3" fill="#cccccc"/>
<rect x="65" y="577.5" width="1" height="1.3" fill="#cccccc"/>
<rect x="16" y="579.5" width="1" height="1.3" fill="#cccccc"/>
<rect x="17" y="579.5" width="8" height="1.3" fill="#9cdcfe"/>
<rect x="26" y="579.5" width="1" height="1.3" fill="#cccccc"/>
<rect x="28" y="579.5" width="1" height="1.3" fill="#cccccc"/>
<rect x="29" y="579.5" width="26" height="1.3" fill="#9cdcfe"/>
<rect x="55" y="579.5" width="1" height="1.3" fill="#cccccc"/>
<rect x="16" y="581.5" width="1" height="1.3" fill="#cccccc"/>
<rect x="17" y="581.5" width="4" height="1.3" fill="#9cdcfe"/>
<rect x="22" y="581.5" width="1" height="1.3" fill="#cccccc"/>
<rect x="24" y="581.5" width="11" height="1.3" fill="#ce9178"/>
<rect x="35" y="581.5" width="1" height="1.3" fill="#cccccc"/>
<rect x="36" y="581.5" width="1" height="1.3" fill="#cccccc"/>
<rect x="12" y="583.5" width="18" height="1.3" fill="#4ec9b0"/>
<rect x="31" y="583.5" width="15" height="1.3" fill="#9cdcfe"/>
<rect x="47" y="583.5" width="1" height="1.3" fill="#cccccc"/>
<rect x="49" y="583.5" width="4" height="1.3" fill="#569cd6"/>
<rect x="53" y="583.5" width="1" height="1.3" fill="#cccccc"/>
<rect x="12" y="585.5" width="15" height="1.3" fill="#569cd6"/>
<rect x="27" y="585.5" width="1" height="1.3" fill="#cccccc"/>
<rect x="28" y="585.5" width="16" height="1.3" fill="#dcdcaa"/>
<rect x="44" y="585.5" width="1" height="1.3" fill="#cccccc"/>
<rect x="45" y="585.5" width="1" height="1.3" fill="#cccccc"/>
<rect x="46" y="585.5" width="20" height="1.3" fill="#9cdcfe"/>
<rect x="66" y="585.5" width="1" height="1.3" fill="#cccccc"/>
<rect x="68" y="585.5" width="1" height="1.3" fill="#cccccc"/>
<rect x="69" y="585.5" width="15" height="1.3" fill="#9cdcfe"/>
<rect x="84" y="585.5" width="1" height="1.3" fill="#cccccc"/>
<rect x="85" y="585.5" width="1" height="1.3" fill="#cccccc"/>
<rect x="86" y="585.5" width="1" height="1.3" fill="#cccccc"/>
<rect x="12" y="587.5" width="15" height="1.3" fill="#569cd6"/>
<rect x="27" y="587.5" width="1" height="1.3" fill="#cccccc"/>
<rect x="28" y="587.5" width="24" height="1.3" fill="#dcdcaa"/>
<rect x="52" y="587.5" width="1" height="1.3" fill="#cccccc"/>
<rect x="53" y="587.5" width="15" height="1.3" fill="#9cdcfe"/>
<rect x="68" y="587.5" width="1" height="1.3" fill="#cccccc"/>
<rect x="70" y="587.5" width="27" height="1.3" fill="#569cd6"/>
<rect x="98" y="587.5" width="1" height="1.3" fill="#cccccc"/>
<rect x="100" y="587.5" width="4" height="1.3" fill="#b5cea8"/>
<rect x="104" y="587.5" width="1" height="1.3" fill="#cccccc"/>
<rect x="105" y="587.5" width="1" height="1.3" fill="#cccccc"/>
<rect x="106" y="587.5" width="1" height="1.3" fill="#cccccc"/>
</g></svg>
<div class="a" style="left:1205px;top:111px;width:1px;height:667px;background:#161616"></div>
<div class="a" style="left:1326px;top:92px;width:14px;height:686px;background:#1f1f1f;border-left:1px solid #141414"></div>
<div class="a" style="left:1327px;top:92px;width:13px;height:1px;background:#101010"></div>
<div class="a" style="left:1327px;top:93px;width:13px;height:3px;background:#262626"></div>
<div class="a" style="left:1327px;top:620px;width:13px;height:57px;background:#2e2e2e"></div>
<div class="a" style="left:1327px;top:650px;width:13px;height:2px;background:#a0a0a0"></div>
<div class="a" style="left:266px;top:778px;width:1074px;height:410px;background:#181818;border-top:1px solid #2b2b2b"></div>
<div class="t" style="left:286.20px;top:786.89px;font-size:11px;line-height:20px;color:#9d9d9d;transform:scaleX(0.8748);">PROBLEMS</div>
<div class="t" style="left:364.00px;top:786.89px;font-size:11px;line-height:20px;color:#e7e7e7;transform:scaleX(0.9111);">OUTPUT</div>
<div class="t" style="left:429.30px;top:786.89px;font-size:11px;line-height:20px;color:#9d9d9d;transform:scaleX(0.8906);">DEBUG CONSOLE</div>
<div class="t" style="left:539.20px;top:786.89px;font-size:11px;line-height:20px;color:#9d9d9d;transform:scaleX(0.9133);">TERMINAL</div>
<div class="a" style="left:362px;top:806.5px;width:45px;height:1.5px;background:#0a6fc0"></div>
<div class="a" style="left:609px;top:796px;width:2px;height:2px;background:#cccccc"></div>
<div class="a" style="left:614px;top:796px;width:2px;height:2px;background:#cccccc"></div>
<div class="a" style="left:619px;top:796px;width:2px;height:2px;background:#cccccc"></div>
<div class="a" style="left:633px;top:786px;width:397px;height:23px;background:#2a2a2a;border-radius:2px"></div>
<div class="t" style="left:640.00px;top:787.84px;font-size:12px;line-height:20px;color:#8b8b8b;transform:scaleX(0.9748);">Filter</div>
<div class="a" style="left:1034px;top:785px;width:170px;height:23px;background:#313131;border:1px solid #3c3c3c;border-radius:2px"></div>
<div class="t" style="left:1043.00px;top:787.99px;font-size:13px;line-height:20px;color:#cccccc;transform:scaleX(0.8970);">ESP-IDF</div>
<svg style="left:0;top:0" width="1" height="1"><path d="M1184.5 795.5L1189.5 799.5L1194.5 795.5" fill="none" stroke="#cccccc" stroke-width="1.2"/></svg>
<svg style="left:1210px;top:790px" width="16" height="14" viewBox="0 0 16 14">
<path d="M1 1.5H14M1 4.5H14M1 7.5H9M1 10.5H8" stroke="#cccccc" stroke-width="1.2"/>
<path d="M10 8.5L14 12.5M14 8.5L10 12.5" stroke="#cccccc" stroke-width="1.2"/></svg>
<svg style="left:1235px;top:789px" width="14" height="16" viewBox="0 0 14 16">
<rect x="1.5" y="7" width="11" height="8" rx="1" fill="none" stroke="#cccccc" stroke-width="1.3"/>
<path d="M3.8 7V4.5A3.2 3.2 0 0 1 10.2 4.5V7" fill="none" stroke="#cccccc" stroke-width="1.3"/></svg>
<div class="a" style="left:1260px;top:797px;width:2px;height:2px;background:#cccccc"></div>
<div class="a" style="left:1265px;top:797px;width:2px;height:2px;background:#cccccc"></div>
<div class="a" style="left:1270px;top:797px;width:2px;height:2px;background:#cccccc"></div>
<svg style="left:0;top:0" width="1" height="1"><path d="M1286.0 799.0L1291.0 795.0L1296.0 799.0" fill="none" stroke="#cccccc" stroke-width="1.2"/></svg>
<svg style="left:1312px;top:792px" width="10" height="10" viewBox="0 0 10 10"><path d="M0.5 0.5L9.5 9.5M9.5 0.5L0.5 9.5" stroke="#cccccc" stroke-width="1.3"/></svg>
<div class="a" style="left:266px;top:814px;width:1061px;height:374px;overflow:hidden">
<div class="m" style="left:20.00px;top:-4.79px;font-size:13.5px;line-height:19px;letter-spacing:-0.4013499999999999px;color:#cccccc;">[/Flash]</div>
<div class="m" style="left:20.00px;top:14.21px;font-size:13.5px;line-height:19px;letter-spacing:-0.4013499999999999px;color:#cccccc;">[Build]</div>
<div class="m" style="left:20.00px;top:33.21px;font-size:13.5px;line-height:19px;letter-spacing:-0.4013499999999999px;color:#cccccc;">Project build complete. To flash, run:</div>
<div class="m" style="left:20.00px;top:52.21px;font-size:13.5px;line-height:19px;letter-spacing:-0.4013499999999999px;color:#cccccc;">ESP-IDF: Flash your project in the ESP-IDF Visual Studio Code Extension</div>
<div class="m" style="left:20.00px;top:71.21px;font-size:13.5px;line-height:19px;letter-spacing:-0.4013499999999999px;color:#cccccc;">or in a ESP-IDF Terminal:</div>
<div class="m" style="left:20.00px;top:90.21px;font-size:13.5px;line-height:19px;letter-spacing:-0.4013499999999999px;color:#cccccc;">idf.py flash</div>
<div class="m" style="left:20.00px;top:109.21px;font-size:13.5px;line-height:19px;letter-spacing:-0.4013499999999999px;color:#cccccc;">or</div>
<div class="m" style="left:20.00px;top:128.21px;font-size:13.5px;line-height:19px;letter-spacing:-0.4013499999999999px;color:#cccccc;">idf.py -p PORT flash</div>
<div class="m" style="left:20.00px;top:147.21px;font-size:13.5px;line-height:19px;letter-spacing:-0.4013499999999999px;color:#cccccc;">or</div>
<div class="m" style="left:20.00px;top:166.21px;font-size:13.5px;line-height:19px;letter-spacing:-0.4013499999999999px;color:#cccccc;">python -m esptool --chip esp32s3 -b 460800 --before default_reset --after hard_reset  --port COM48 write_flash --flash_mode dio</div>
<div class="m" style="left:20.00px;top:185.21px;font-size:13.5px;line-height:19px;letter-spacing:-0.4013499999999999px;color:#cccccc;">--flash_size 4MB --flash_freq 80m 0x0 bootloader/bootloader.bin 0x10000 example_qspi_with_ram.bin 0x8000 partition_table/</div>
<div class="m" style="left:20.00px;top:204.21px;font-size:13.5px;line-height:19px;letter-spacing:-0.4013499999999999px;color:#cccccc;">partition-table.bin</div>
<div class="m" style="left:20.00px;top:223.21px;font-size:13.5px;line-height:19px;letter-spacing:-0.4013499999999999px;color:#cccccc;">or from the "c:\Users\15907\Desktop\product\s3\ESP32-S3-Touch-LCD\ESP32-S3-Touch-LCD-1.</div>
<div class="m" style="left:20.00px;top:242.21px;font-size:13.5px;line-height:19px;letter-spacing:-0.4013499999999999px;color:#cccccc;">75\ESP-IDF-v5.4\05_LVGL_WITH_RAM\build" directory</div>
<div class="m" style="left:20.00px;top:261.21px;font-size:13.5px;line-height:19px;letter-spacing:-0.4013499999999999px;color:#cccccc;">python -m esptool --chip esp32s3 -b 460800 --before default_reset --after hard_reset  --port COM48 write_flash --flash_mode dio</div>
<div class="m" style="left:20.00px;top:280.21px;font-size:13.5px;line-height:19px;letter-spacing:-0.4013499999999999px;color:#cccccc;">[/Build]</div>
<div class="m" style="left:20.00px;top:299.21px;font-size:13.5px;line-height:19px;letter-spacing:-0.4013499999999999px;color:#cccccc;">[Flash]</div>
<div class="m" style="left:20.00px;top:318.21px;font-size:13.5px;line-height:19px;letter-spacing:-0.4013499999999999px;color:#cccccc;">Flash Done </div>
<div class="m" style="left:20.00px;top:337.21px;font-size:13.5px;line-height:19px;letter-spacing:-0.4013499999999999px;color:#cccccc;">Flash has finished. You can monitor your device with 'ESP-IDF: Monitor command'</div>
</div>
<svg style="left:373px;top:1132px" width="14" height="15" viewBox="0 0 14 15"><path d="M8.8 0.8L0.9 8.8H6.3L4.3 14.3L13.2 6.3H7.6Z" fill="#f6c94a" stroke="#0a0a0a" stroke-width="0.9" stroke-linejoin="round"/></svg>
<div class="a" style="left:386px;top:1054px;width:839px;height:1px;background:#c8c8c8"></div>
<div class="a" style="left:286px;top:1073px;width:292.6px;height:1px;background:#c8c8c8"></div>
<div class="a" style="left:1327px;top:813px;width:13px;height:2px;background:#2a2a2a"></div>
<div class="a" style="left:1327px;top:1058px;width:13px;height:130px;background:#2e2e2e"></div>
<div class="a" style="left:993px;top:761px;width:44px;height:25px;background:#202020;border:1px solid #454545;border-radius:3px;box-shadow:0 2px 8px #000"></div>
<div class="t" style="left:1002.00px;top:763.84px;font-size:12px;line-height:20px;color:#cccccc;transform:scaleX(1.0123);">Filter</div>
<div class="a" style="left:877px;top:1010px;width:452px;height:43px;background:#1f1f1f;border:1px solid #2e2e2e;border-radius:4px;box-shadow:0 0 8px 2px rgba(0,0,0,0.6)"></div>
<svg style="left:888px;top:1023px" width="16" height="16" viewBox="0 0 16 16"><circle cx="8" cy="8" r="7.2" fill="none" stroke="#3794ff" stroke-width="1.3"/><path d="M8 6.8V12" stroke="#3794ff" stroke-width="1.5"/><circle cx="8" cy="4.6" r="0.95" fill="#3794ff"/></svg>
<div class="t" style="left:909.30px;top:1022.09px;font-size:13px;line-height:20px;color:#cccccc;transform:scaleX(0.9398);">Flash Done</div>
<svg style="left:978px;top:1024px" width="14" height="15" viewBox="0 0 14 15"><path d="M8.8 0.8L0.9 8.8H6.3L4.3 14.3L13.2 6.3H7.6Z" fill="#f6c94a" stroke="#0a0a0a" stroke-width="0.9" stroke-linejoin="round"/></svg>
<div class="a" style="left:877px;top:1069px;width:452px;height:107px;background:#1f1f1f;border:1px solid #2e2e2e;border-radius:4px;box-shadow:0 0 8px 2px rgba(0,0,0,0.6)"></div>
<svg style="left:888px;top:1082.7px" width="16" height="16" viewBox="0 0 16 16"><circle cx="8" cy="8" r="7.2" fill="none" stroke="#3794ff" stroke-width="1.3"/><path d="M8 6.8V12" stroke="#3794ff" stroke-width="1.5"/><circle cx="8" cy="4.6" r="0.95" fill="#3794ff"/></svg>
<div class="t" style="left:909.30px;top:1082.09px;font-size:13px;line-height:20px;color:#cccccc;transform:scaleX(1.0044);">Do you want to install the recommended 'C/C++ Extension</div>
<div class="t" style="left:909.30px;top:1104.09px;font-size:13px;line-height:20px;color:#cccccc;transform:scaleX(1.0005);">Pack' extension from Microsoft for the C++ language?</div>
<svg style="left:0;top:0" width="1" height="1"><path d="M1281.25 1086.07 L1281.44 1083.85 L1283.16 1083.85 L1283.35 1086.07 L1285.04 1086.77 L1286.75 1085.34 L1287.96 1086.55 L1286.53 1088.26 L1287.23 1089.95 L1289.45 1090.14 L1289.45 1091.86 L1287.23 1092.05 L1286.53 1093.74 L1287.96 1095.45 L1286.75 1096.66 L1285.04 1095.23 L1283.35 1095.93 L1283.16 1098.15 L1281.44 1098.15 L1281.25 1095.93 L1279.56 1095.23 L1277.85 1096.66 L1276.64 1095.45 L1278.07 1093.74 L1277.37 1092.05 L1275.15 1091.86 L1275.15 1090.14 L1277.37 1089.95 L1278.07 1088.26 L1276.64 1086.55 L1277.85 1085.34 L1279.56 1086.77Z" fill="none" stroke="#cccccc" stroke-width="1.3" stroke-linejoin="round"/><circle cx="1282.3" cy="1091" r="1.87" fill="none" stroke="#cccccc" stroke-width="1.3"/></svg>
<svg style="left:1303px;top:1086px" width="11" height="11" viewBox="0 0 11 11"><path d="M0.7 0.7L10.3 10.3M10.3 0.7L0.7 10.3" stroke="#cccccc" stroke-width="1.3"/></svg>
<div class="a" style="left:1102px;top:1134px;width:53px;height:28px;background:#0078d4;border-radius:2px"></div>
<div class="t" style="left:1113.90px;top:1138.89px;font-size:13px;line-height:20px;color:#ffffff;transform:scaleX(0.8979);">Install</div>
<div class="a" style="left:1165px;top:1134px;width:153px;height:28px;background:#313131;border:1px solid #3c3c3c;border-radius:2px"></div>
<div class="t" style="left:1176.30px;top:1138.89px;font-size:13px;line-height:20px;color:#cccccc;transform:scaleX(0.9027);">Show Recommendations</div>
<div class="a" style="left:0;top:1188px;width:1340px;height:22px;background:#181818;border-top:1px solid #2b2b2b"></div>
<div class="a" style="left:0;top:1188px;width:34px;height:22px;background:#0078d4"></div>
<svg style="left:12px;top:1192px" width="11" height="13" viewBox="0 0 11 13"><path d="M1 5.5L4.8 9L1 12.5M10 1L6.2 4.5L10 8" fill="none" stroke="#ffffff" stroke-width="1.2"/></svg>
<svg style="left:42px;top:1192px" width="14" height="13" viewBox="0 0 14 13">
<path d="M1 2V11.5H13V4.5H6.5L5 2Z M1 5H13" fill="none" stroke="#cccccc" stroke-width="1.2" stroke-linejoin="round"/>
<path d="M3 0.5H7" stroke="#cccccc" stroke-width="1"/></svg>
<svg style="left:73px;top:1192px" width="14" height="13" viewBox="0 0 14 13">
<path d="M2 5.5L2.5 0.8L5 3.5H9L11.5 0.8L12 5.5C13 6.5 13 11 12 11.5S2 12 2 11.5S1 6.5 2 5.5Z" fill="#cccccc"/>
<circle cx="5" cy="8.3" r="1.2" fill="#181818"/><circle cx="9" cy="8.3" r="1.2" fill="#181818"/></svg>
<div class="t" style="left:89.60px;top:1190.44px;font-size:12px;line-height:20px;color:#cccccc;transform:scaleX(0.8893);">ESP-IDF v5.5.1</div>
<svg style="left:182px;top:1192px" width="12" height="12" viewBox="0 0 12 12"><path d="M6 0.7L7.6 4.2L11.3 4.5L8.5 7L9.3 11L6 9L2.7 11L3.5 7L0.7 4.5L4.4 4.2Z" fill="none" stroke="#cccccc" stroke-width="1.1" stroke-linejoin="round"/></svg>
<div class="t" style="left:198.50px;top:1190.44px;font-size:12px;line-height:20px;color:#cccccc;transform:scaleX(0.8289);">UART</div>
<svg style="left:245px;top:1192px" width="9" height="13" viewBox="0 0 9 13"><path d="M2.5 0.5V3.5M6.5 0.5V3.5M0.8 3.5H8.2V6.5C8.2 8.5 6.5 9.5 4.5 9.5S0.8 8.5 0.8 6.5Z M4.5 9.5V12.5" fill="none" stroke="#cccccc" stroke-width="1.1"/></svg>
<div class="t" style="left:259.40px;top:1190.44px;font-size:12px;line-height:20px;color:#cccccc;transform:scaleX(0.9578);">COM48</div>
<svg style="left:317px;top:1193px" width="11" height="11" viewBox="0 0 11 11"><rect x="2" y="2" width="7" height="7" fill="none" stroke="#cccccc" stroke-width="1.2"/><path d="M4 0V2M7 0V2M4 9V11M7 9V11M0 4H2M0 7H2M9 4H11M9 7H11" stroke="#cccccc" stroke-width="1"/></svg>
<div class="t" style="left:332.50px;top:1190.44px;font-size:12px;line-height:20px;color:#cccccc;transform:scaleX(0.9414);">esp32s3</div>
<svg style="left:0;top:0" width="1" height="1"><path d="M397.88 1194.69 L398.05 1192.75 L399.55 1192.75 L399.72 1194.69 L401.20 1195.30 L402.69 1194.04 L403.76 1195.11 L402.50 1196.60 L403.11 1198.08 L405.05 1198.25 L405.05 1199.75 L403.11 1199.92 L402.50 1201.40 L403.76 1202.89 L402.69 1203.96 L401.20 1202.70 L399.72 1203.31 L399.55 1205.25 L398.05 1205.25 L397.88 1203.31 L396.40 1202.70 L394.91 1203.96 L393.84 1202.89 L395.10 1201.40 L394.49 1199.92 L392.55 1199.75 L392.55 1198.25 L394.49 1198.08 L395.10 1196.60 L393.84 1195.11 L394.91 1194.04 L396.40 1195.30Z" fill="none" stroke="#cccccc" stroke-width="1.1" stroke-linejoin="round"/><circle cx="398.8" cy="1199" r="1.64" fill="none" stroke="#cccccc" stroke-width="1.1"/></svg>
<svg style="left:423px;top:1192px" width="11" height="13" viewBox="0 0 11 13"><path d="M0.5 2.5H10.5M3.5 2.5V0.8H7.5V2.5M1.5 2.5L2.2 12.3H8.8L9.5 2.5M4 5V10M5.5 5V10M7 5V10" fill="none" stroke="#cccccc" stroke-width="1"/></svg>
<svg style="left:452px;top:1192px" width="14" height="14" viewBox="0 0 14 14"><path d="M1 13L7 7M6 5A4 4 0 0 1 11.5 0.8L9.5 3L11 4.5L13.2 2.5A4 4 0 0 1 9 8L3 13.5" fill="none" stroke="#cccccc" stroke-width="1.2"/></svg>
<svg style="left:484px;top:1192px" width="9" height="14" viewBox="0 0 9 14"><path d="M6 0.5L1.5 7.5H5L3 13.5L8 5.5H4.5Z" fill="none" stroke="#cccccc" stroke-width="1.1" stroke-linejoin="round"/></svg>
<svg style="left:512px;top:1192px" width="14" height="13" viewBox="0 0 14 13"><rect x="0.8" y="0.8" width="12.4" height="9" fill="none" stroke="#cccccc" stroke-width="1.2"/><path d="M4 12.3H10" stroke="#cccccc" stroke-width="1.2"/></svg>
<svg style="left:541px;top:1191px" width="15" height="15" viewBox="0 0 15 15">
<path d="M5 0.8V5M5 0.8L14 6L8 9.5" fill="none" stroke="#cccccc" stroke-width="1.1" stroke-linejoin="round"/>
<ellipse cx="4" cy="10.5" rx="2.3" ry="3" fill="none" stroke="#cccccc" stroke-width="1"/>
<path d="M0.5 9H1.8M6.2 9H7.5M0.5 11.5H1.8M6.2 11.5H7.5" stroke="#cccccc" stroke-width="0.9"/></svg>
<svg style="left:573px;top:1192px" width="11" height="13" viewBox="0 0 11 13"><path d="M5 0.5C6 3 9.8 5 9.8 8.5A4.3 4.3 0 0 1 1.2 8.5C1.2 6.5 2.5 5 3 4C3.5 5.5 4 6 4.8 6C5.5 4 5 2 5 0.5Z M5.5 12.5C4 12.5 3.5 11 4.2 9.8C5 8.5 5.5 8 5.5 7.5C6.5 9 7.2 10 7 11C6.8 12 6.2 12.5 5.5 12.5" fill="none" stroke="#cccccc" stroke-width="1"/></svg>
<svg style="left:602px;top:1192px" width="14" height="13" viewBox="0 0 14 13"><rect x="0.8" y="0.8" width="12.4" height="11.4" fill="none" stroke="#cccccc" stroke-width="1.1"/><path d="M3.5 3.5L6 6L3.5 8.5M6.5 9.5H10" fill="none" stroke="#cccccc" stroke-width="1.1"/></svg>
<svg style="left:632px;top:1192px" width="14" height="13" viewBox="0 0 14 13"><rect x="0.8" y="0.8" width="12.4" height="11.4" fill="none" stroke="#cccccc" stroke-width="1.1"/><path d="M3 6.5H10M7 3.5L10 6.5L7 9.5" fill="none" stroke="#cccccc" stroke-width="1.3"/></svg>
<svg style="left:662px;top:1192px" width="13" height="13" viewBox="0 0 13 13"><circle cx="6.5" cy="6.5" r="5.8" fill="none" stroke="#cccccc" stroke-width="1.1"/><path d="M4 4L9 9M9 4L4 9" stroke="#cccccc" stroke-width="1.1"/></svg>
<div class="t" style="left:679.00px;top:1190.44px;font-size:12px;line-height:20px;color:#cccccc;transform:scaleX(0.9593);">0</div>
<svg style="left:690px;top:1192px" width="13" height="12" viewBox="0 0 13 12"><path d="M6.5 0.8L12.3 11.2H0.7Z" fill="none" stroke="#cccccc" stroke-width="1.1" stroke-linejoin="round"/><path d="M6.5 4.2V7.8M6.5 8.8V10" stroke="#cccccc" stroke-width="1.1"/></svg>
<div class="t" style="left:706.20px;top:1190.44px;font-size:12px;line-height:20px;color:#cccccc;transform:scaleX(0.9593);">0</div>
<div class="t" style="left:729.80px;top:1190.44px;font-size:12px;line-height:20px;color:#cccccc;transform:scaleX(0.9065);">[ESP-IDF: QEMU]</div>
<div class="t" style="left:834.60px;top:1190.44px;font-size:12px;line-height:20px;color:#cccccc;transform:scaleX(0.9219);">[ESP-IDF: OpenOCD Server]</div>
<div class="t" style="left:992.50px;top:1190.44px;font-size:12px;line-height:20px;color:#cccccc;transform:scaleX(0.9740);">Ln 355, Col 51</div>
<div class="t" style="left:1085.80px;top:1190.44px;font-size:12px;line-height:20px;color:#cccccc;transform:scaleX(0.8998);">Spaces: 4</div>
<div class="t" style="left:1150.50px;top:1190.44px;font-size:12px;line-height:20px;color:#cccccc;transform:scaleX(0.9118);">UTF-8</div>
<div class="t" style="left:1198.70px;top:1190.44px;font-size:12px;line-height:20px;color:#cccccc;transform:scaleX(0.7643);">LF</div>
<div class="t" style="left:1225.40px;top:1190.44px;font-size:12px;line-height:20px;color:#cccccc;transform:scaleX(0.8891);">{ }</div>
<div class="t" style="left:1243.70px;top:1190.44px;font-size:12px;line-height:20px;color:#cccccc;transform:scaleX(0.9822);">C++</div>
<svg style="left:1280px;top:1191px" width="16" height="16" viewBox="0 0 18 18">
<circle cx="6.1" cy="5.2" r="2.7" fill="none" stroke="#cccccc" stroke-width="1.6"/>
<circle cx="12" cy="5.2" r="2.7" fill="none" stroke="#cccccc" stroke-width="1.6"/>
<rect x="1.6" y="8.3" width="14.8" height="8" rx="3.6" fill="none" stroke="#cccccc" stroke-width="1.7"/>
<rect x="6.9" y="10.6" width="1.6" height="3.2" fill="#cccccc"/><rect x="9.7" y="10.6" width="1.6" height="3.2" fill="#cccccc"/></svg>
<svg style="left:1312px;top:1191px" width="14" height="15" viewBox="0 0 14 15">
<path d="M2 11.5V7A5 5 0 0 1 9 2.5M11.5 6.5V11.5M0.8 11.5H12.8M5 13.5H8.5" fill="none" stroke="#cccccc" stroke-width="1.2"/>
<circle cx="11" cy="3" r="2.4" fill="#cccccc"/></svg>
</body></html>
